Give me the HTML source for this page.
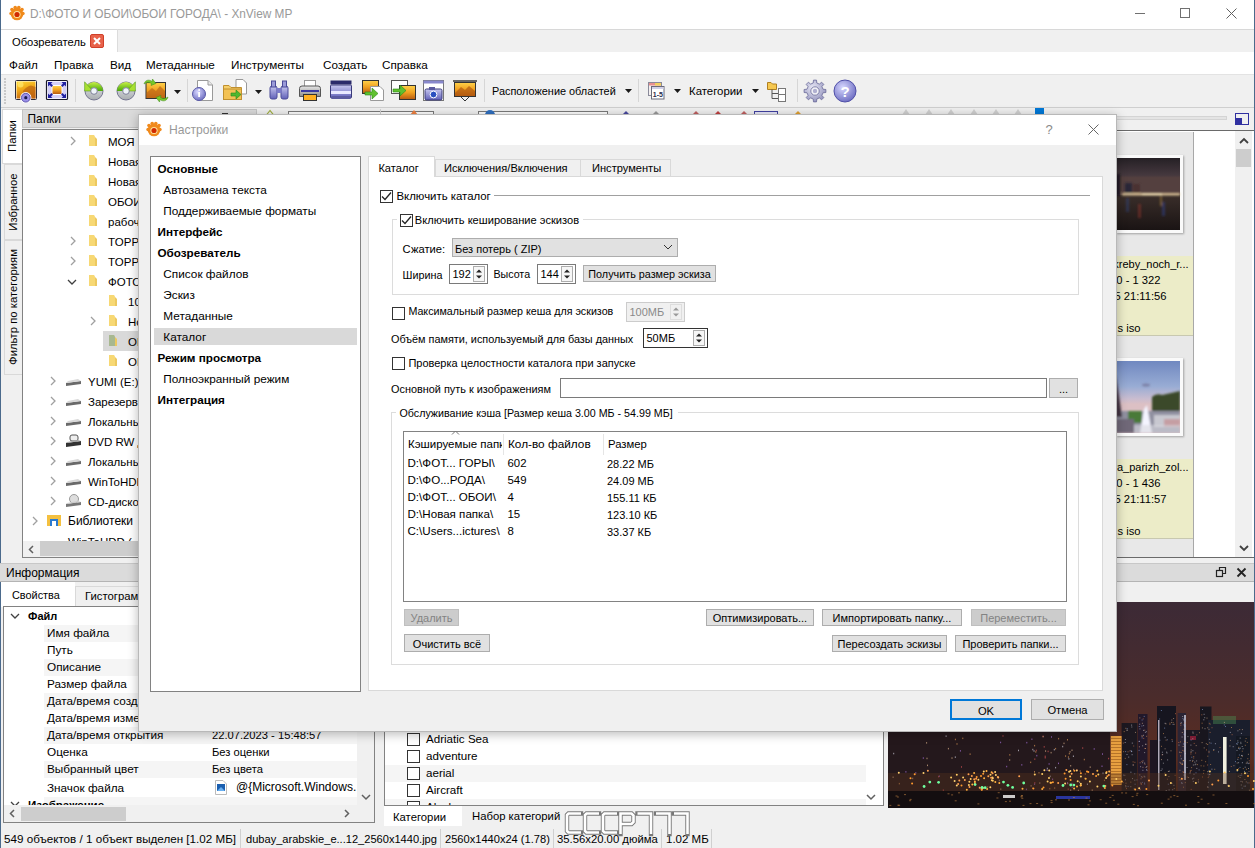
<!DOCTYPE html>
<html><head><meta charset="utf-8"><title>XnView MP</title>
<style>
html,body{margin:0;padding:0;width:1255px;height:848px;overflow:hidden;background:#f0f0f0;position:relative;font-family:"Liberation Sans", sans-serif}
.t{position:absolute;white-space:nowrap;line-height:1.117;font-family:"Liberation Sans", sans-serif}
svg{overflow:visible}
</style></head><body>
<div style="position:absolute;left:0px;top:0px;width:1255px;height:29px;background:#fff"></div><div style="position:absolute;left:0px;top:29px;width:1255px;height:23px;background:#f0f0f0"></div><div style="position:absolute;left:1px;top:29px;width:116px;height:23px;background:#fff"></div><div style="position:absolute;left:1px;top:29px;width:1254px;height:1px;background:#d8d8d8"></div><div style="position:absolute;left:117px;top:29px;width:1px;height:23px;background:#dcdcdc"></div><div style="position:absolute;left:0px;top:52px;width:1255px;height:22px;background:#fff"></div><div style="position:absolute;left:0px;top:74px;width:1255px;height:33px;background:#f0f0f0;border-top:1px solid #e3e3e3;box-sizing:border-box"></div><div style="position:absolute;left:0px;top:107px;width:1255px;height:1px;background:#cfcfcf"></div><div style="position:absolute;left:0px;top:0px;width:1px;height:848px;background:#4b6a8c"></div><div style="position:absolute;left:1254px;top:0px;width:1px;height:848px;background:#4b6a8c"></div><svg style="position:absolute;left:8px;top:4px" width="18" height="18" viewBox="0 0 18 18">
<g fill="#f08a1c">
<circle cx="9" cy="10" r="6.3"/>
<circle cx="4" cy="5.5" r="1.8"/><circle cx="7.2" cy="3.6" r="1.8"/><circle cx="10.8" cy="3.6" r="1.8"/><circle cx="14" cy="5.5" r="1.8"/>
<circle cx="3" cy="9.5" r="1.7"/><circle cx="15" cy="9.5" r="1.7"/>
</g>
<circle cx="9" cy="10.5" r="3.6" fill="#fde3a0"/>
<circle cx="9" cy="10.5" r="2.6" fill="#d22a00"/>
</svg><div class="t" style="left:30px;top:8.28px;font-size:11.85px;color:#999999;">D:\ФОТО И ОБОИ\ОБОИ ГОРОДА\ - XnView MP</div><div style="position:absolute;left:1135px;top:13px;width:10px;height:1px;background:#707070"></div><div style="position:absolute;left:1180px;top:8px;width:10px;height:10px;border:1px solid #707070;box-sizing:border-box"></div><svg style="position:absolute;left:1226px;top:8px" width="11" height="11"><path d="M0.5 0.5L10.5 10.5M10.5 0.5L0.5 10.5" stroke="#606060" stroke-width="1"/></svg><div class="t" style="left:12px;top:35.86px;font-size:11.2px;color:#000;">Обозреватель</div><svg style="position:absolute;left:90px;top:34px" width="14" height="14"><rect x="0.5" y="0.5" width="13" height="13" rx="1.5" fill="#e8624a" stroke="#d0402a"/>
<path d="M4 4L10 10M10 4L4 10" stroke="#fff" stroke-width="2"/></svg><div class="t" style="left:9px;top:57.91px;font-size:11.7px;color:#000;">Файл</div><div class="t" style="left:54px;top:57.91px;font-size:11.7px;color:#000;">Правка</div><div class="t" style="left:110px;top:57.91px;font-size:11.7px;color:#000;">Вид</div><div class="t" style="left:146px;top:57.91px;font-size:11.7px;color:#000;">Метаданные</div><div class="t" style="left:231px;top:57.91px;font-size:11.7px;color:#000;">Инструменты</div><div class="t" style="left:323px;top:57.91px;font-size:11.7px;color:#000;">Создать</div><div class="t" style="left:382px;top:57.91px;font-size:11.7px;color:#000;">Справка</div><svg width="0" height="0" style="position:absolute">
<defs>
<linearGradient id="gold" x1="0" y1="0" x2="0" y2="1"><stop offset="0" stop-color="#ffd24a"/><stop offset="0.5" stop-color="#f0a020"/><stop offset="1" stop-color="#b85a10"/></linearGradient>
<linearGradient id="grn" x1="0" y1="0" x2="0" y2="1"><stop offset="0" stop-color="#a8e060"/><stop offset="1" stop-color="#3a9a20"/></linearGradient>
<linearGradient id="gry" x1="0" y1="0" x2="0" y2="1"><stop offset="0" stop-color="#e8e8e8"/><stop offset="1" stop-color="#8a8a8a"/></linearGradient>
<linearGradient id="pur" x1="0" y1="0" x2="0" y2="1"><stop offset="0" stop-color="#c8c8f0"/><stop offset="1" stop-color="#6060b8"/></linearGradient>
<radialGradient id="purr" cx="0.4" cy="0.35" r="0.7"><stop offset="0" stop-color="#d8d8ff"/><stop offset="1" stop-color="#6a6ac0"/></radialGradient>
<linearGradient id="sky" x1="0" y1="0" x2="0" y2="1"><stop offset="0" stop-color="#3b2b36"/><stop offset="0.55" stop-color="#54301f"/><stop offset="1" stop-color="#5a2c18"/></linearGradient>
</defs></svg><div style="position:absolute;left:4px;top:78px;width:2px;height:2px;background:#c9c9c9"></div><div style="position:absolute;left:4px;top:81px;width:2px;height:2px;background:#c9c9c9"></div><div style="position:absolute;left:4px;top:84px;width:2px;height:2px;background:#c9c9c9"></div><div style="position:absolute;left:4px;top:87px;width:2px;height:2px;background:#c9c9c9"></div><div style="position:absolute;left:4px;top:90px;width:2px;height:2px;background:#c9c9c9"></div><div style="position:absolute;left:4px;top:93px;width:2px;height:2px;background:#c9c9c9"></div><div style="position:absolute;left:4px;top:96px;width:2px;height:2px;background:#c9c9c9"></div><div style="position:absolute;left:4px;top:99px;width:2px;height:2px;background:#c9c9c9"></div><div style="position:absolute;left:4px;top:102px;width:2px;height:2px;background:#c9c9c9"></div><div style="position:absolute;left:75px;top:79px;width:1px;height:23px;background:#d6d6d6"></div><div style="position:absolute;left:187px;top:79px;width:1px;height:23px;background:#d6d6d6"></div><div style="position:absolute;left:484px;top:79px;width:1px;height:23px;background:#d6d6d6"></div><div style="position:absolute;left:638px;top:79px;width:1px;height:23px;background:#d6d6d6"></div><div style="position:absolute;left:797px;top:79px;width:1px;height:23px;background:#d6d6d6"></div><svg style="position:absolute;left:14px;top:79px" width="24" height="24" viewBox="0 0 24 24"><defs><linearGradient id="g1" x1="0" y1="0" x2="0.3" y2="1"><stop offset="0" stop-color="#ffd838"/><stop offset="0.5" stop-color="#f0a818"/><stop offset="1" stop-color="#c86a10"/></linearGradient></defs>
<rect x="1.5" y="1.5" width="21" height="19" rx="1" fill="#fff" stroke="#2a2a3a" stroke-width="1"/>
<rect x="2.5" y="2.5" width="19" height="17" fill="url(#g1)"/>
<path d="M9 12Q13 7 17 6.5L21.5 8V19.5H9z" fill="#c06810" opacity="0.75"/>
<circle cx="6.5" cy="5.5" r="3" fill="#ffe870" opacity="0.7"/>
<circle cx="11.8" cy="18.7" r="5.6" fill="#fff"/><circle cx="11.8" cy="18.7" r="4.4" fill="#9a90e8" stroke="#4a40a0" stroke-width="0.8"/><circle cx="11.8" cy="18.7" r="1.6" fill="#1a1a50"/></svg><svg style="position:absolute;left:45px;top:79px" width="24" height="22" viewBox="0 0 24 22"><rect x="1.5" y="1.5" width="21" height="19" rx="1" fill="#fff" stroke="#1a1a2a" stroke-width="1.2"/>
<rect x="2.7" y="2.7" width="18.6" height="16.6" fill="#d4d0f8"/>
<rect x="6.5" y="6" width="11" height="10" fill="#fff"/><rect x="7.5" y="7" width="9" height="8" fill="url(#gold)"/>
<path d="M3 3H7.5L6 4.5L8 6.5L6.5 8L4.5 6L3 7.5z M21 3V7.5L19.5 6L17.5 8L16 6.5L18 4.5L16.5 3z M3 19V14.5L4.5 16L6.5 14L8 15.5L6 17.5L7.5 19z M21 19H16.5L18 17.5L16 15.5L17.5 14L19.5 16L21 14.5z" fill="#2020a0"/></svg><svg style="position:absolute;left:84px;top:80.5px" width="20" height="20" viewBox="0 0 20 20"><defs><linearGradient id="lime" x1="0" y1="0" x2="0" y2="1"><stop offset="0" stop-color="#c8f048"/><stop offset="1" stop-color="#48a808"/></linearGradient><linearGradient id="lgr" x1="0" y1="0" x2="0" y2="1"><stop offset="0" stop-color="#e8ecec"/><stop offset="1" stop-color="#a8acb0"/></linearGradient></defs><g ><circle cx="10" cy="10" r="9" fill="url(#lgr)" stroke="#6a6a88" stroke-width="0.9"/><path d="M1 10A9 9 0 0 1 19 10H13.4A3.4 3.4 0 0 0 6.6 10z" fill="url(#lime)"/><path d="M0.6 0.8V10H9z" fill="#a8e030" stroke="#5a9a20" stroke-width="0.6"/><circle cx="10" cy="10" r="3.3" fill="#eef4f8" stroke="#6a6a88" stroke-width="0.8"/></g></svg><svg style="position:absolute;left:115.5px;top:80.5px" width="20" height="20" viewBox="0 0 20 20"><defs><linearGradient id="lime" x1="0" y1="0" x2="0" y2="1"><stop offset="0" stop-color="#c8f048"/><stop offset="1" stop-color="#48a808"/></linearGradient><linearGradient id="lgr" x1="0" y1="0" x2="0" y2="1"><stop offset="0" stop-color="#e8ecec"/><stop offset="1" stop-color="#a8acb0"/></linearGradient></defs><g transform="translate(20 0) scale(-1 1)"><circle cx="10" cy="10" r="9" fill="url(#lgr)" stroke="#6a6a88" stroke-width="0.9"/><path d="M1 10A9 9 0 0 1 19 10H13.4A3.4 3.4 0 0 0 6.6 10z" fill="url(#lime)"/><path d="M0.6 0.8V10H9z" fill="#a8e030" stroke="#5a9a20" stroke-width="0.6"/><circle cx="10" cy="10" r="3.3" fill="#eef4f8" stroke="#6a6a88" stroke-width="0.8"/></g></svg><svg style="position:absolute;left:143px;top:78px" width="26" height="25" viewBox="0 0 26 25"><rect x="3" y="4.5" width="19.5" height="16" fill="url(#gold)" stroke="#333" stroke-width="1"/>
<path d="M3.5 15L9 10L13 13L17 8L22 13V20H3.5z" fill="#c06a18" opacity="0.75"/>
<path d="M1 6C2 2 6 1 9 3.5L9.5 1L13 5.5L8 7.5L8.5 5.5C6 4 3 4.5 1 6z" fill="#78c828" stroke="#3a8a18" stroke-width="0.5"/>
<path d="M25 19C24 23 20 24 17 21.5L16.5 24L13 19.5L18 17.5L17.5 19.5C20 21 23 20.5 25 19z" fill="#78c828" stroke="#3a8a18" stroke-width="0.5"/></svg><svg style="position:absolute;left:174px;top:90px" width="8" height="5" viewBox="0 0 8 5"><path d="M0 0H7L3.5 4z" fill="#1a1a1a"/></svg><svg style="position:absolute;left:191px;top:79px" width="24" height="23" viewBox="0 0 24 23"><path d="M6.5 1.5H17L21.5 6V21.5H6.5z" fill="#fff" stroke="#999"/><path d="M17 1.5V6H21.5" fill="#e8e8e8" stroke="#999"/>
<circle cx="8" cy="15" r="6.5" fill="url(#purr)" stroke="#5a5aa8"/><rect x="7.2" y="13" width="1.8" height="5" fill="#fff"/><circle cx="8.1" cy="11" r="1" fill="#fff"/></svg><svg style="position:absolute;left:222px;top:78px" width="26" height="24" viewBox="0 0 26 24"><path d="M14 1.5H21L24.5 5V16H14z" fill="#fff" stroke="#999"/>
<path d="M1.5 7.5H7L9 9.5H19.5V21.5H1.5z" fill="#f6cf6a" stroke="#c09030"/><rect x="1.5" y="11" width="18" height="10.5" fill="#f3c255" stroke="#c09030"/>
<path d="M9 15H14V12L19 16.5L14 21V18H9z" fill="#50b830" stroke="#2a8a18" stroke-width="0.6"/></svg><svg style="position:absolute;left:255px;top:90px" width="8" height="5" viewBox="0 0 8 5"><path d="M0 0H7L3.5 4z" fill="#1a1a1a"/></svg><svg style="position:absolute;left:268px;top:80px" width="22" height="20" viewBox="0 0 22 20"><rect x="2" y="6" width="7" height="13" rx="2" fill="url(#pur)" stroke="#4a4a98"/><rect x="13" y="6" width="7" height="13" rx="2" fill="url(#pur)" stroke="#4a4a98"/>
<rect x="3.5" y="1" width="4" height="6" fill="#9a9ad8" stroke="#4a4a98"/><rect x="14.5" y="1" width="4" height="6" fill="#9a9ad8" stroke="#4a4a98"/><rect x="8.5" y="8" width="5" height="5" fill="#7a7ac8"/></svg><svg style="position:absolute;left:298px;top:79px" width="24" height="23" viewBox="0 0 24 23"><rect x="6.5" y="1.5" width="11" height="7" fill="#fff" stroke="#999"/>
<path d="M1.5 9.5Q1.5 7 4 7H20Q22.5 7 22.5 9.5V17.5H1.5z" fill="url(#gry)" stroke="#555"/>
<rect x="3" y="11" width="18" height="2" fill="#3a3aa0"/>
<rect x="5.5" y="15.5" width="13" height="6" fill="#ffb020" stroke="#333"/></svg><svg style="position:absolute;left:329px;top:79px" width="24" height="22" viewBox="0 0 24 22"><rect x="1.5" y="1.5" width="21" height="4" fill="#2a2a6a"/><rect x="1.5" y="6" width="21" height="13" rx="1" fill="url(#pur)" stroke="#3a3a7a"/>
<rect x="2" y="12" width="20" height="3" fill="#e8e8ff"/><rect x="2.5" y="17" width="19" height="3" fill="#5a5aa0"/></svg><svg style="position:absolute;left:361px;top:79px" width="24" height="23" viewBox="0 0 24 23"><rect x="1.5" y="1.5" width="16" height="13" fill="url(#gold)" stroke="#333"/><path d="M9.5 7.5H19L22.5 11V21.5H9.5z" fill="#fff" stroke="#999"/>
<path d="M4 13H11V9L17 14.5L11 20V16H4z" fill="#60c030" stroke="#2a8a18" stroke-width="0.6"/></svg><svg style="position:absolute;left:390px;top:79px" width="27" height="22" viewBox="0 0 27 22"><rect x="1.5" y="1.5" width="16" height="13" fill="#fff" stroke="#555"/><rect x="9.5" y="6.5" width="16" height="14" fill="url(#gold)" stroke="#333"/>
<path d="M3 10H10V6L16 11.5L10 17V13H3z" fill="#60c030" stroke="#2a8a18" stroke-width="0.6"/></svg><svg style="position:absolute;left:422px;top:79px" width="23" height="23" viewBox="0 0 23 23"><rect x="1.5" y="1.5" width="20" height="20" fill="#fff" stroke="#777"/><rect x="1.5" y="1.5" width="20" height="3" fill="#8888cc"/>
<rect x="3" y="10" width="17" height="11" rx="1.5" fill="url(#pur)" stroke="#3a3a7a"/><rect x="7" y="8" width="6" height="3" fill="#5a5aa0"/>
<circle cx="11.5" cy="15.5" r="3.4" fill="#2a50c0" stroke="#fff" stroke-width="1"/></svg><svg style="position:absolute;left:452px;top:79px" width="26" height="23" viewBox="0 0 26 23"><rect x="1" y="1" width="24" height="2" fill="#666"/><rect x="2.5" y="3.5" width="21" height="14" fill="url(#gold)" stroke="#333"/>
<path d="M3 14L9 8L13 11L17 7L23 12V17H3z" fill="#b05810" opacity="0.7"/><path d="M9 18L13 22L17 18" fill="none" stroke="#333"/></svg><div class="t" style="left:492px;top:85.14px;font-size:10.9px;color:#000;">Расположение областей</div><svg style="position:absolute;left:625px;top:89px" width="8" height="5" viewBox="0 0 8 5"><path d="M0 0H7L3.5 4z" fill="#1a1a1a"/></svg><svg style="position:absolute;left:646px;top:81px" width="20" height="20" viewBox="0 0 20 20"><rect x="2.5" y="1.5" width="13" height="13" fill="#f4f0f0" stroke="#8a8a9a"/><rect x="3" y="2" width="12" height="2.5" fill="#e89090"/><rect x="9" y="2" width="6" height="2.5" fill="#f0d060"/>
<rect x="5.5" y="5.5" width="12.5" height="12.5" fill="#fff" stroke="#6a6a7a"/><rect x="6" y="6" width="11.5" height="2" fill="#d0d0e8"/>
<text x="11.8" y="15.5" font-size="7" font-weight="bold" font-family="Liberation Sans" text-anchor="middle" fill="#2a2a4a">1-5</text></svg><svg style="position:absolute;left:674px;top:89px" width="8" height="5" viewBox="0 0 8 5"><path d="M0 0H7L3.5 4z" fill="#1a1a1a"/></svg><div class="t" style="left:689px;top:84.68px;font-size:11.4px;color:#000;">Категории</div><svg style="position:absolute;left:752px;top:89px" width="8" height="5" viewBox="0 0 8 5"><path d="M0 0H7L3.5 4z" fill="#1a1a1a"/></svg><svg style="position:absolute;left:766px;top:79px" width="24" height="23" viewBox="0 0 24 23"><path d="M1.5 3.5H5L6.5 5H10.5V10.5H1.5z" fill="#f6c850" stroke="#b08020"/>
<path d="M6 10.5V19.5H12M6 14.5H12" stroke="#555" fill="none"/>
<rect x="12.5" y="9.5" width="7" height="8" fill="#fff" stroke="#777"/><rect x="12.5" y="15.5" width="7" height="7" fill="#fff" stroke="#777"/></svg><svg style="position:absolute;left:803px;top:79px" width="24" height="24" viewBox="0 0 24 24"><defs><radialGradient id="gr" cx="0.4" cy="0.35" r="0.75"><stop offset="0" stop-color="#e8e8f4"/><stop offset="1" stop-color="#8a8ab8"/></radialGradient></defs><path d="M20.00 10.21L22.89 10.47L22.89 13.53L20.00 13.79L18.92 16.39L20.79 18.62L18.62 20.79L16.39 18.92L13.79 20.00L13.53 22.89L10.47 22.89L10.21 20.00L7.61 18.92L5.38 20.79L3.21 18.62L5.08 16.39L4.00 13.79L1.11 13.53L1.11 10.47L4.00 10.21L5.08 7.61L3.21 5.38L5.38 3.21L7.61 5.08L10.21 4.00L10.47 1.11L13.53 1.11L13.79 4.00L16.39 5.08L18.62 3.21L20.79 5.38L18.92 7.61z" fill="url(#gr)" stroke="#6a6a98" stroke-width="0.8"/><circle cx="12" cy="12" r="4.2" fill="#f4f4f8" stroke="#6a6a98" stroke-width="0.8"/><circle cx="12" cy="12" r="2.2" fill="#b0b0d0"/></svg><svg style="position:absolute;left:833px;top:79px" width="24" height="24" viewBox="0 0 24 24"><circle cx="12" cy="12" r="11" fill="url(#purr)" stroke="#5050a8"/>
<text x="12" y="17.5" font-size="15" font-weight="bold" font-family="Liberation Sans" text-anchor="middle" fill="#fff">?</text></svg><div style="position:absolute;left:2px;top:109px;width:20px;height:55px;background:#fff;border:1px solid #d9d9d9;border-right:none;box-sizing:border-box"></div><div style="position:absolute;left:4px;top:164px;width:18px;height:76px;background:#f0f0f0;border:1px solid #d9d9d9;border-right:none;box-sizing:border-box"></div><div style="position:absolute;left:4px;top:240px;width:18px;height:135px;background:#f0f0f0;border:1px solid #d9d9d9;border-right:none;box-sizing:border-box"></div><div class="t" style="left:13px;top:136px;font-size:11.3px;transform:translate(-50%,-50%) rotate(-90deg);line-height:1">Папки</div><div class="t" style="left:14px;top:202px;font-size:11.3px;transform:translate(-50%,-50%) rotate(-90deg);line-height:1">Избранное</div><div class="t" style="left:14px;top:307px;font-size:11.3px;transform:translate(-50%,-50%) rotate(-90deg);line-height:1">Фильтр по категориям</div><div style="position:absolute;left:22px;top:109px;width:235px;height:19px;background:#dbdbdb;border:1px solid #c4c4c4;box-sizing:border-box"></div><div class="t" style="left:27.5px;top:113.03px;font-size:11.9px;color:#000;">Папки</div><div style="position:absolute;left:22px;top:129px;width:130px;height:429px;background:#fff;border:1px solid #828282;box-sizing:border-box"></div><div style="position:absolute;left:103px;top:331px;width:40px;height:20px;background:#d9d9d9"></div><svg style="position:absolute;left:70px;top:136px" width="6" height="10" viewBox="0 0 6 10"><path d="M1 1L5 5L1 9" stroke="#a0a0a0" stroke-width="1.3" fill="none"/></svg><svg style="position:absolute;left:88px;top:134px" width="10" height="13" viewBox="0 0 10 13"><path d="M1 1H6L7 2.5V12H1z" fill="#f7d874"/><path d="M7 3L9 5V12H7z" fill="#ecc860"/></svg><div class="t" style="left:108px;top:135.59px;font-size:11.5px;color:#000;">МОЯ ПАПКА</div><svg style="position:absolute;left:88px;top:154px" width="10" height="13" viewBox="0 0 10 13"><path d="M1 1H6L7 2.5V12H1z" fill="#f7d874"/><path d="M7 3L9 5V12H7z" fill="#ecc860"/></svg><div class="t" style="left:108px;top:155.59px;font-size:11.5px;color:#000;">Новая папка</div><svg style="position:absolute;left:88px;top:174px" width="10" height="13" viewBox="0 0 10 13"><path d="M1 1H6L7 2.5V12H1z" fill="#f7d874"/><path d="M7 3L9 5V12H7z" fill="#ecc860"/></svg><div class="t" style="left:108px;top:175.59px;font-size:11.5px;color:#000;">Новая папка</div><svg style="position:absolute;left:88px;top:194px" width="10" height="13" viewBox="0 0 10 13"><path d="M1 1H6L7 2.5V12H1z" fill="#f7d874"/><path d="M7 3L9 5V12H7z" fill="#ecc860"/></svg><div class="t" style="left:108px;top:195.59px;font-size:11.5px;color:#000;">ОБОИ ГОРОДА</div><svg style="position:absolute;left:88px;top:214px" width="10" height="13" viewBox="0 0 10 13"><path d="M1 1H6L7 2.5V12H1z" fill="#f7d874"/><path d="M7 3L9 5V12H7z" fill="#ecc860"/></svg><div class="t" style="left:108px;top:215.59px;font-size:11.5px;color:#000;">рабочий</div><svg style="position:absolute;left:70px;top:236px" width="6" height="10" viewBox="0 0 6 10"><path d="M1 1L5 5L1 9" stroke="#a0a0a0" stroke-width="1.3" fill="none"/></svg><svg style="position:absolute;left:88px;top:234px" width="10" height="13" viewBox="0 0 10 13"><path d="M1 1H6L7 2.5V12H1z" fill="#f7d874"/><path d="M7 3L9 5V12H7z" fill="#ecc860"/></svg><div class="t" style="left:108px;top:235.59px;font-size:11.5px;color:#000;">TOPPENT</div><svg style="position:absolute;left:70px;top:256px" width="6" height="10" viewBox="0 0 6 10"><path d="M1 1L5 5L1 9" stroke="#a0a0a0" stroke-width="1.3" fill="none"/></svg><svg style="position:absolute;left:88px;top:254px" width="10" height="13" viewBox="0 0 10 13"><path d="M1 1H6L7 2.5V12H1z" fill="#f7d874"/><path d="M7 3L9 5V12H7z" fill="#ecc860"/></svg><div class="t" style="left:108px;top:255.59px;font-size:11.5px;color:#000;">TOPPENT</div><svg style="position:absolute;left:67px;top:279px" width="10" height="6" viewBox="0 0 10 6"><path d="M1 1L5 5L9 1" stroke="#404040" stroke-width="1.3" fill="none"/></svg><svg style="position:absolute;left:88px;top:274px" width="10" height="13" viewBox="0 0 10 13"><path d="M1 1H6L7 2.5V12H1z" fill="#f7d874"/><path d="M7 3L9 5V12H7z" fill="#ecc860"/></svg><div class="t" style="left:108px;top:275.59px;font-size:11.5px;color:#000;">ФОТО И</div><svg style="position:absolute;left:108px;top:294px" width="10" height="13" viewBox="0 0 10 13"><path d="M1 1H6L7 2.5V12H1z" fill="#f7d874"/><path d="M7 3L9 5V12H7z" fill="#ecc860"/></svg><div class="t" style="left:128px;top:295.59px;font-size:11.5px;color:#000;">10000</div><svg style="position:absolute;left:90px;top:316px" width="6" height="10" viewBox="0 0 6 10"><path d="M1 1L5 5L1 9" stroke="#a0a0a0" stroke-width="1.3" fill="none"/></svg><svg style="position:absolute;left:108px;top:314px" width="10" height="13" viewBox="0 0 10 13"><path d="M1 1H6L7 2.5V12H1z" fill="#f7d874"/><path d="M7 3L9 5V12H7z" fill="#ecc860"/></svg><div class="t" style="left:128px;top:315.59px;font-size:11.5px;color:#000;">Новая</div><svg style="position:absolute;left:108px;top:334px" width="10" height="13" viewBox="0 0 10 13"><path d="M1 1H6L7 2.5V12H1z" fill="#a8b890"/><path d="M7 3L9 5V12H7z" fill="#ecc860"/></svg><div class="t" style="left:128px;top:335.59px;font-size:11.5px;color:#000;">ОБОИ</div><svg style="position:absolute;left:108px;top:354px" width="10" height="13" viewBox="0 0 10 13"><path d="M1 1H6L7 2.5V12H1z" fill="#f7d874"/><path d="M7 3L9 5V12H7z" fill="#ecc860"/></svg><div class="t" style="left:128px;top:355.59px;font-size:11.5px;color:#000;">ОБОИ</div><svg style="position:absolute;left:50px;top:376px" width="6" height="10" viewBox="0 0 6 10"><path d="M1 1L5 5L1 9" stroke="#a0a0a0" stroke-width="1.3" fill="none"/></svg><svg style="position:absolute;left:65px;top:374px" width="17" height="14" viewBox="0 0 17 14"><path d="M1 9L16 7V10L1 12z" fill="#6a6a6a"/><path d="M1 9L16 7L13 5L3 7z" fill="#d8d8d8"/></svg><div class="t" style="left:88px;top:375.59px;font-size:11.5px;color:#000;">YUMI (E:)</div><svg style="position:absolute;left:50px;top:396px" width="6" height="10" viewBox="0 0 6 10"><path d="M1 1L5 5L1 9" stroke="#a0a0a0" stroke-width="1.3" fill="none"/></svg><svg style="position:absolute;left:65px;top:394px" width="17" height="14" viewBox="0 0 17 14"><path d="M1 9L16 7V10L1 12z" fill="#6a6a6a"/><path d="M1 9L16 7L13 5L3 7z" fill="#d8d8d8"/></svg><div class="t" style="left:88px;top:395.59px;font-size:11.5px;color:#000;">Зарезервировано</div><svg style="position:absolute;left:50px;top:416px" width="6" height="10" viewBox="0 0 6 10"><path d="M1 1L5 5L1 9" stroke="#a0a0a0" stroke-width="1.3" fill="none"/></svg><svg style="position:absolute;left:65px;top:414px" width="17" height="14" viewBox="0 0 17 14"><path d="M1 9L16 7V10L1 12z" fill="#6a6a6a"/><path d="M1 9L16 7L13 5L3 7z" fill="#d8d8d8"/></svg><div class="t" style="left:88px;top:415.59px;font-size:11.5px;color:#000;">Локальный диск</div><svg style="position:absolute;left:50px;top:436px" width="6" height="10" viewBox="0 0 6 10"><path d="M1 1L5 5L1 9" stroke="#a0a0a0" stroke-width="1.3" fill="none"/></svg><svg style="position:absolute;left:65px;top:434px" width="17" height="14" viewBox="0 0 17 14"><rect x="5" y="1" width="8" height="6" rx="2" fill="#eee" stroke="#555"/><path d="M1 9L16 7V11L1 13z" fill="#333"/><path d="M1 9L16 7L13 6L2 8z" fill="#aaa"/></svg><div class="t" style="left:88px;top:435.59px;font-size:11.5px;color:#000;">DVD RW дисковод</div><svg style="position:absolute;left:50px;top:456px" width="6" height="10" viewBox="0 0 6 10"><path d="M1 1L5 5L1 9" stroke="#a0a0a0" stroke-width="1.3" fill="none"/></svg><svg style="position:absolute;left:65px;top:454px" width="17" height="14" viewBox="0 0 17 14"><path d="M1 9L16 7V10L1 12z" fill="#6a6a6a"/><path d="M1 9L16 7L13 5L3 7z" fill="#d8d8d8"/></svg><div class="t" style="left:88px;top:455.59px;font-size:11.5px;color:#000;">Локальный диск</div><svg style="position:absolute;left:50px;top:476px" width="6" height="10" viewBox="0 0 6 10"><path d="M1 1L5 5L1 9" stroke="#a0a0a0" stroke-width="1.3" fill="none"/></svg><svg style="position:absolute;left:65px;top:474px" width="17" height="14" viewBox="0 0 17 14"><path d="M1 9L16 7V10L1 12z" fill="#6a6a6a"/><path d="M1 9L16 7L13 5L3 7z" fill="#d8d8d8"/></svg><div class="t" style="left:88px;top:475.59px;font-size:11.5px;color:#000;">WinToHDD</div><svg style="position:absolute;left:50px;top:496px" width="6" height="10" viewBox="0 0 6 10"><path d="M1 1L5 5L1 9" stroke="#a0a0a0" stroke-width="1.3" fill="none"/></svg><svg style="position:absolute;left:65px;top:494px" width="17" height="14" viewBox="0 0 17 14"><circle cx="9" cy="5" r="4.5" fill="#ddd" stroke="#999"/><path d="M1 10L16 8V11L1 13z" fill="#777"/><path d="M1 10L16 8L13 7L2 9z" fill="#ccc"/></svg><div class="t" style="left:88px;top:495.59px;font-size:11.5px;color:#000;">CD-дисковод</div><svg style="position:absolute;left:32px;top:516px" width="6" height="10" viewBox="0 0 6 10"><path d="M1 1L5 5L1 9" stroke="#a0a0a0" stroke-width="1.3" fill="none"/></svg><svg style="position:absolute;left:46px;top:513px" width="17" height="15" viewBox="0 0 17 15"><rect x="1" y="2" width="14" height="11" fill="#f4c040"/><rect x="4" y="6" width="8" height="7" fill="#2a7ad0"/><rect x="6" y="8" width="4" height="5" fill="#fff"/></svg><div class="t" style="left:68px;top:515.14px;font-size:12px;color:#000;">Библиотеки</div><div class="t" style="left:68px;top:535.59px;font-size:11.5px;color:#000;">WinToHDD (</div><div style="position:absolute;left:23px;top:541px;width:115px;height:16px;background:#f0f0f0"></div><div style="position:absolute;left:40px;top:541px;width:98px;height:15px;background:#cdcdcd"></div><svg style="position:absolute;left:28px;top:545px" width="6" height="9" viewBox="0 0 6 9"><path d="M5 1L1.5 4.5L5 8" stroke="#606060" stroke-width="1.5" fill="none"/></svg><div style="position:absolute;left:0px;top:563px;width:380px;height:19px;background:#dbdbdb;border-top:1px solid #c8c8c8;border-bottom:1px solid #b4b4b4;box-sizing:border-box"></div><div class="t" style="left:6px;top:567.14px;font-size:12px;color:#000;">Информация</div><div style="position:absolute;left:1px;top:582px;width:74px;height:25px;background:#fff"></div><div style="position:absolute;left:75px;top:586px;width:70px;height:21px;background:#f0f0f0;border:1px solid #d9d9d9;box-sizing:border-box"></div><div class="t" style="left:12px;top:589.14px;font-size:10.9px;color:#000;">Свойства</div><div class="t" style="left:85px;top:589.77px;font-size:11.3px;color:#000;">Гистограмма</div><div style="position:absolute;left:3px;top:606px;width:372px;height:217px;background:#fff;border:1px solid #828282;box-sizing:border-box"></div><svg style="position:absolute;left:10px;top:613px" width="10" height="6" viewBox="0 0 10 6"><path d="M1 1L5 5L9 1" stroke="#404040" stroke-width="1.3" fill="none"/></svg><div class="t" style="left:28px;top:610.04px;font-size:11px;color:#000;font-weight:bold;">Файл</div><div style="position:absolute;left:44px;top:625px;width:313px;height:17px;background:#f5f5f5"></div><div class="t" style="left:47px;top:626.37px;font-size:11.75px;color:#000;">Имя файла</div><div class="t" style="left:47px;top:643.37px;font-size:11.75px;color:#000;">Путь</div><div style="position:absolute;left:44px;top:659px;width:313px;height:17px;background:#f5f5f5"></div><div class="t" style="left:47px;top:660.37px;font-size:11.75px;color:#000;">Описание</div><div class="t" style="left:47px;top:677.37px;font-size:11.75px;color:#000;">Размер файла</div><div style="position:absolute;left:44px;top:693px;width:313px;height:17px;background:#f5f5f5"></div><div class="t" style="left:47px;top:694.37px;font-size:11.75px;color:#000;">Дата/время созд</div><div class="t" style="left:47px;top:711.37px;font-size:11.75px;color:#000;">Дата/время изме</div><div style="position:absolute;left:44px;top:727px;width:313px;height:17px;background:#f5f5f5"></div><div class="t" style="left:47px;top:728.37px;font-size:11.75px;color:#000;">Дата/время открытия</div><div class="t" style="left:212px;top:728.86px;font-size:11.2px;color:#000;">22.07.2023 - 15:48:57</div><div class="t" style="left:47px;top:745.37px;font-size:11.75px;color:#000;">Оценка</div><div class="t" style="left:212px;top:745.86px;font-size:11.2px;color:#000;">Без оценки</div><div style="position:absolute;left:44px;top:761px;width:313px;height:17px;background:#f5f5f5"></div><div class="t" style="left:47px;top:762.37px;font-size:11.75px;color:#000;">Выбранный цвет</div><div class="t" style="left:212px;top:762.86px;font-size:11.2px;color:#000;">Без цвета</div><div class="t" style="left:47px;top:781.37px;font-size:11.75px;color:#000;">Значок файла</div><svg style="position:absolute;left:215px;top:780px" width="12" height="15" viewBox="0 0 12 15"><path d="M0.5 0.5H8L11.5 4V14.5H0.5z" fill="#fff" stroke="#bbb"/><rect x="2" y="4" width="8" height="7" fill="#1a5fb0"/><path d="M2 11L6 7L10 11z" fill="#6ab0f0"/></svg><div class="t" style="left:236px;top:781.14px;font-size:12px;color:#000;">@{Microsoft.Windows.</div><div style="position:absolute;left:44px;top:797px;width:313px;height:8px;background:#f5f5f5"></div><svg style="position:absolute;left:10px;top:801px" width="10" height="6" viewBox="0 0 10 6"><path d="M1 1L5 5L9 1" stroke="#404040" stroke-width="1.3" fill="none"/></svg><div class="t" style="left:28px;top:798.59px;font-size:11.5px;color:#000;font-weight:bold;">Изображение</div><div style="position:absolute;left:357px;top:607px;width:17px;height:198px;background:#f0f0f0"></div><svg style="position:absolute;left:361px;top:794px" width="10" height="6" viewBox="0 0 10 6"><path d="M1 1L5 5L9 1" stroke="#606060" stroke-width="1.5" fill="none"/></svg><div style="position:absolute;left:4px;top:805px;width:370px;height:17px;background:#f0f0f0"></div><div style="position:absolute;left:21px;top:807px;width:105px;height:14px;background:#cdcdcd"></div><svg style="position:absolute;left:9px;top:809px" width="6" height="9" viewBox="0 0 6 9"><path d="M5 1L1.5 4.5L5 8" stroke="#606060" stroke-width="1.5" fill="none"/></svg><svg style="position:absolute;left:344px;top:809px" width="6" height="9" viewBox="0 0 6 9"><path d="M1 1L4.5 4.5L1 8" stroke="#606060" stroke-width="1.5" fill="none"/></svg><div style="position:absolute;left:384px;top:700px;width:500px;height:106px;background:#fff;border:1px solid #828282;box-sizing:border-box"></div><div style="position:absolute;left:385px;top:701px;width:498px;height:104px;overflow:hidden"><div style="position:absolute;left:22px;top:32px;width:13px;height:13px;background:#fff;border:1px solid #333;box-sizing:border-box"></div><div class="t" style="left:41px;top:31.50px;font-size:11.6px;color:#000;">Adriatic Sea</div><div style="position:absolute;left:22px;top:49px;width:13px;height:13px;background:#fff;border:1px solid #333;box-sizing:border-box"></div><div class="t" style="left:41px;top:48.50px;font-size:11.6px;color:#000;">adventure</div><div style="position:absolute;left:0px;top:64px;width:481px;height:17px;background:#f5f5f5"></div><div style="position:absolute;left:22px;top:66px;width:13px;height:13px;background:#fff;border:1px solid #333;box-sizing:border-box"></div><div class="t" style="left:41px;top:65.50px;font-size:11.6px;color:#000;">aerial</div><div style="position:absolute;left:22px;top:83px;width:13px;height:13px;background:#fff;border:1px solid #333;box-sizing:border-box"></div><div class="t" style="left:41px;top:82.50px;font-size:11.6px;color:#000;">Aircraft</div><div style="position:absolute;left:0px;top:98px;width:481px;height:17px;background:#f5f5f5"></div><div style="position:absolute;left:22px;top:100px;width:13px;height:13px;background:#fff;border:1px solid #333;box-sizing:border-box"></div><div class="t" style="left:41px;top:99.50px;font-size:11.6px;color:#000;">Alaska</div></div><svg style="position:absolute;left:866px;top:794px" width="10" height="6" viewBox="0 0 10 6"><path d="M1 1L5 5L9 1" stroke="#606060" stroke-width="1.5" fill="none"/></svg><div style="position:absolute;left:384px;top:806px;width:78px;height:20px;background:#fff"></div><div class="t" style="left:393px;top:810.77px;font-size:11.3px;color:#000;">Категории</div><div class="t" style="left:472px;top:809.77px;font-size:11.3px;color:#000;">Набор категорий</div><div style="position:absolute;left:1116px;top:108px;width:138px;height:22px;background:#f0f0f0"></div><div style="position:absolute;left:1116px;top:116px;width:111px;height:4px;background:#e4e4e4;border:1px solid #d4d4d4;box-sizing:border-box"></div><svg style="position:absolute;left:1234px;top:112px" width="16" height="14" viewBox="0 0 16 14"><rect x="1.5" y="1.5" width="13" height="11" fill="none" stroke="#3030a0"/><rect x="1" y="6" width="7" height="7" fill="#3030a0"/></svg><div style="position:absolute;left:1116px;top:130px;width:138px;height:1px;background:#6a6a6a"></div><div style="position:absolute;left:1116px;top:131px;width:138px;height:426px;background:#fff"></div><div style="position:absolute;left:1235px;top:131px;width:17px;height:426px;background:#f0f0f0"></div><svg style="position:absolute;left:1239px;top:137px" width="10" height="7" viewBox="0 0 10 7"><path d="M1 6L5 2L9 6" stroke="#404040" stroke-width="1.8" fill="none"/></svg><div style="position:absolute;left:1236px;top:149px;width:15px;height:18px;background:#cdcdcd"></div><svg style="position:absolute;left:1239px;top:545px" width="10" height="7" viewBox="0 0 10 7"><path d="M1 1L5 5L9 1" stroke="#404040" stroke-width="1.8" fill="none"/></svg><div style="position:absolute;left:1116px;top:132px;width:78px;height:425px;background:#e8e8e8;border-right:1px solid #a8a8a8;box-sizing:border-box"></div><div style="position:absolute;left:1116px;top:256px;width:77px;height:80px;background:#ececc8;border-bottom:1px solid #c8c8b0;box-sizing:border-box"></div><div style="position:absolute;left:1116px;top:459px;width:77px;height:80px;background:#ececc8;border-bottom:1px solid #c8c8b0;box-sizing:border-box"></div><div style="position:absolute;left:1116px;top:155px;width:67px;height:78px;background:#fafafa;box-shadow:1px 1px 2px rgba(0,0,0,0.3)"></div><div style="position:absolute;left:1116px;top:358px;width:67px;height:78px;background:#fafafa;box-shadow:1px 1px 2px rgba(0,0,0,0.3)"></div><svg style="position:absolute;left:1116px;top:158px" width="64" height="72" viewBox="0 0 64 72"><defs><linearGradient id="t1s" x1="0" y1="0" x2="0" y2="1"><stop offset="0" stop-color="#252025"/><stop offset="0.45" stop-color="#45383e"/><stop offset="0.52" stop-color="#54403f"/></linearGradient>
<linearGradient id="t1w" x1="0" y1="0" x2="0" y2="1"><stop offset="0" stop-color="#3a2e2a"/><stop offset="1" stop-color="#1a1414"/></linearGradient>
<filter id="t1b"><feGaussianBlur stdDeviation="0.8"/></filter></defs>
<rect width="64" height="38" fill="url(#t1s)"/><rect y="37" width="64" height="35" fill="url(#t1w)"/>
<g filter="url(#t1b)"><rect x="0" y="16" width="4" height="22" fill="#1e1820"/><rect x="9" y="25" width="7" height="12" fill="#2a2838"/><rect x="17" y="26" width="7" height="11" fill="#4a3030"/>
<rect x="6" y="35" width="58" height="2.5" fill="#e8d0a0" opacity="0.85"/><rect x="26" y="35.5" width="20" height="1.5" fill="#fff0c0"/>
<rect x="10" y="40" width="3" height="14" fill="#3050a0" opacity="0.35"/><rect x="22" y="46" width="3" height="14" fill="#c04030" opacity="0.35"/><rect x="46" y="44" width="3" height="14" fill="#3050c0" opacity="0.35"/><rect x="44" y="38" width="2" height="10" fill="#d0a040" opacity="0.4"/></g></svg><svg style="position:absolute;left:1116px;top:361px" width="64" height="72" viewBox="0 0 64 72"><defs><linearGradient id="t2s" x1="0" y1="0" x2="0" y2="1"><stop offset="0" stop-color="#7088c0"/><stop offset="0.35" stop-color="#98acd4"/><stop offset="0.52" stop-color="#c8bcd0"/><stop offset="0.6" stop-color="#dcc0c4"/></linearGradient>
<filter id="t2b" x="-10%" y="-10%" width="120%" height="120%"><feGaussianBlur stdDeviation="1"/></filter><clipPath id="t2c"><rect width="64" height="72"/></clipPath></defs>
<rect width="64" height="72" fill="url(#t2s)"/>
<g filter="url(#t2b)" clip-path="url(#t2c)"><path d="M36 36Q40 32 46 34L64 30V52H36z" fill="#3a4a2a"/><rect x="0" y="50" width="64" height="22" fill="#9090a0"/><rect x="12" y="50" width="14" height="12" fill="#4a7a38"/>
<path d="M0 14L6 56H0z" fill="#403040"/><path d="M24 72L28 48L31 44L36 72z" fill="#f4f4ff"/><rect x="38" y="54" width="26" height="12" fill="#c8c8d0"/><rect x="0" y="58" width="18" height="14" fill="#706878"/><rect x="48" y="58" width="16" height="8" fill="#c06060" opacity="0.4"/><rect x="18" y="64" width="46" height="8" fill="#d8d8e0" opacity="0.6"/><ellipse cx="30" cy="24" rx="4" ry="1.5" fill="#605878" opacity="0.5"/></g></svg><div style="position:absolute;left:1116px;top:0;width:78px;height:848px;overflow:hidden"><div class="t" style="right:5.5px;top:258.05px;font-size:11px;color:#000;text-align:right;">kreby_noch_r...</div><div class="t" style="right:33.5px;top:273.86px;font-size:11.2px;color:#000;text-align:right;">40 - 1 322</div><div class="t" style="right:27.5px;top:289.86px;font-size:11.2px;color:#000;text-align:right;">5 21:11:56</div><div class="t" style="right:53.5px;top:321.86px;font-size:11.2px;color:#000;text-align:right;">&#x27; s iso</div></div><div style="position:absolute;left:1116px;top:0;width:78px;height:848px;overflow:hidden"><div class="t" style="right:5.5px;top:461.05px;font-size:11px;color:#000;text-align:right;">ya_parizh_zol...</div><div class="t" style="right:33.5px;top:476.86px;font-size:11.2px;color:#000;text-align:right;">40 - 1 436</div><div class="t" style="right:27.5px;top:492.86px;font-size:11.2px;color:#000;text-align:right;">5 21:11:57</div><div class="t" style="right:53.5px;top:524.86px;font-size:11.2px;color:#000;text-align:right;">&#x27; s iso</div></div><div style="position:absolute;left:1116px;top:557px;width:138px;height:1px;background:#6a6a6a"></div><div style="position:absolute;left:886px;top:563px;width:368px;height:19px;background:#dbdbdb;border-top:1px solid #c8c8c8;border-bottom:1px solid #b4b4b4;box-sizing:border-box"></div><svg style="position:absolute;left:1215px;top:566px" width="12" height="12" viewBox="0 0 12 12"><rect x="1.5" y="4.5" width="6" height="6" fill="none" stroke="#222" stroke-width="1.2"/><path d="M4.5 4.5V1.5H10.5V7.5H7.5" fill="none" stroke="#222" stroke-width="1.2"/></svg><svg style="position:absolute;left:1236px;top:567px" width="11" height="11" viewBox="0 0 11 11"><path d="M1.5 1.5L9.5 9.5M9.5 1.5L1.5 9.5" stroke="#222" stroke-width="1.8"/></svg><svg style="position:absolute;left:888px;top:602px" width="366" height="206" viewBox="0 0 366 206"><defs><linearGradient id="sky2" x1="0" y1="0" x2="0" y2="1"><stop offset="0" stop-color="#3c2a36"/><stop offset="0.45" stop-color="#4a2c2c"/><stop offset="0.75" stop-color="#5a2c20"/><stop offset="1" stop-color="#3a2018"/></linearGradient><filter id="bl" x="-20%" y="-20%" width="140%" height="140%"><feGaussianBlur stdDeviation="0.6"/></filter><filter id="bl2" x="-50%" y="-50%" width="200%" height="200%"><feGaussianBlur stdDeviation="1.2"/></filter></defs><rect width="366" height="206" fill="url(#sky2)"/><rect x="0" y="130" width="222" height="60" fill="#24181c" opacity="1"/><rect x="233.5999999999999" y="121" width="15.800000000000182" height="69" fill="#1c1820" opacity="1"/><rect x="250" y="112" width="9.5" height="78" fill="#22182a" opacity="1"/><rect x="262" y="138" width="7" height="52" fill="#1e1622" opacity="1"/><rect x="269" y="104" width="19" height="86" fill="#16151f" opacity="1"/><rect x="270" y="118" width="1.5" height="70" fill="#d8d0e0" opacity="0.8"/><rect x="289.70000000000005" y="111" width="8.299999999999955" height="79" fill="#2a2434" opacity="1"/><rect x="296" y="113" width="2" height="65" fill="#e0e0f0" opacity="0.7"/><rect x="298" y="128" width="14" height="62" fill="#1c1822" opacity="1"/><rect x="302" y="134" width="6" height="4" fill="#c02040" opacity="0.6"/><rect x="312" y="104.5" width="11.5" height="85.5" fill="#18161e" opacity="1"/><rect x="320" y="118" width="42" height="72" fill="#1a1e2c" opacity="1"/><rect x="325" y="114" width="23" height="8" fill="#4a8a50" opacity="0.45"/><rect x="335" y="135" width="3.599999999999909" height="47" fill="#f0f0e0" opacity="1"/><rect x="348" y="134" width="14" height="56" fill="#141822" opacity="1"/><rect x="222.79999999999995" y="134" width="10.799999999999955" height="49" fill="#e8a040" opacity="1"/><rect x="222.79999999999995" y="136" width="10.799999999999955" height="1" fill="#a06020" opacity="0.7"/><rect x="222.79999999999995" y="139" width="10.799999999999955" height="1" fill="#a06020" opacity="0.7"/><rect x="222.79999999999995" y="142" width="10.799999999999955" height="1" fill="#a06020" opacity="0.7"/><rect x="222.79999999999995" y="145" width="10.799999999999955" height="1" fill="#a06020" opacity="0.7"/><rect x="222.79999999999995" y="148" width="10.799999999999955" height="1" fill="#a06020" opacity="0.7"/><rect x="222.79999999999995" y="151" width="10.799999999999955" height="1" fill="#a06020" opacity="0.7"/><rect x="222.79999999999995" y="154" width="10.799999999999955" height="1" fill="#a06020" opacity="0.7"/><rect x="222.79999999999995" y="157" width="10.799999999999955" height="1" fill="#a06020" opacity="0.7"/><rect x="222.79999999999995" y="160" width="10.799999999999955" height="1" fill="#a06020" opacity="0.7"/><rect x="222.79999999999995" y="163" width="10.799999999999955" height="1" fill="#a06020" opacity="0.7"/><rect x="222.79999999999995" y="166" width="10.799999999999955" height="1" fill="#a06020" opacity="0.7"/><rect x="222.79999999999995" y="169" width="10.799999999999955" height="1" fill="#a06020" opacity="0.7"/><rect x="222.79999999999995" y="172" width="10.799999999999955" height="1" fill="#a06020" opacity="0.7"/><rect x="222.79999999999995" y="175" width="10.799999999999955" height="1" fill="#a06020" opacity="0.7"/><rect x="222.79999999999995" y="178" width="10.799999999999955" height="1" fill="#a06020" opacity="0.7"/><rect x="222.79999999999995" y="181" width="10.799999999999955" height="1" fill="#a06020" opacity="0.7"/><g filter="url(#bl)"><rect x="359.3" y="180.4" width="1" height="1" fill="#a0c0ff" opacity="0.5"/><rect x="354.8" y="166.1" width="1" height="1" fill="#ffb060" opacity="0.5"/><rect x="356.4" y="177.0" width="1" height="1" fill="#ffd0a0" opacity="0.5"/><rect x="352.3" y="139.8" width="1" height="1" fill="#e0e0e0" opacity="0.5"/><rect x="242.6" y="148.1" width="1" height="1" fill="#a0c0ff" opacity="0.5"/><rect x="280.4" y="174.0" width="1" height="1" fill="#ffd0a0" opacity="0.5"/><rect x="234.6" y="180.1" width="1" height="1" fill="#ff9050" opacity="0.5"/><rect x="245.2" y="143.5" width="1" height="1" fill="#ff9050" opacity="0.5"/><rect x="293.7" y="160.7" width="1" height="1" fill="#a0c0ff" opacity="0.5"/><rect x="243.6" y="152.2" width="1" height="1" fill="#f0f0ff" opacity="0.5"/><rect x="360.9" y="187.7" width="1" height="1" fill="#ffd0a0" opacity="0.5"/><rect x="302.4" y="142.6" width="1" height="1" fill="#f0f0ff" opacity="0.5"/><rect x="235.1" y="172.6" width="1" height="1" fill="#a0c0ff" opacity="0.5"/><rect x="257.3" y="142.0" width="1" height="1" fill="#ffd0a0" opacity="0.5"/><rect x="237.2" y="183.2" width="1" height="1" fill="#ffd0a0" opacity="0.5"/><rect x="353.2" y="172.6" width="1" height="1" fill="#a0c0ff" opacity="0.5"/><rect x="255.0" y="127.9" width="1" height="1" fill="#e0e0e0" opacity="0.5"/><rect x="302.7" y="147.4" width="1" height="1" fill="#ffd0a0" opacity="0.5"/><rect x="351.2" y="127.1" width="1" height="1" fill="#ffb060" opacity="0.5"/><rect x="250.6" y="147.9" width="1" height="1" fill="#a0c0ff" opacity="0.5"/><rect x="281.4" y="120.6" width="1" height="1" fill="#ff9050" opacity="0.5"/><rect x="296.9" y="170.5" width="1" height="1" fill="#a0c0ff" opacity="0.5"/><rect x="325.2" y="148.0" width="1" height="1" fill="#ffb060" opacity="0.5"/><rect x="238.0" y="186.1" width="1" height="1" fill="#ff9050" opacity="0.5"/><rect x="311.0" y="130.2" width="1" height="1" fill="#ffb060" opacity="0.5"/><rect x="360.8" y="160.5" width="1" height="1" fill="#ff9050" opacity="0.5"/><rect x="250.8" y="124.0" width="1" height="1" fill="#a0c0ff" opacity="0.5"/><rect x="298.6" y="165.0" width="1" height="1" fill="#f0f0ff" opacity="0.5"/><rect x="323.5" y="125.2" width="1" height="1" fill="#ff9050" opacity="0.5"/><rect x="290.3" y="140.0" width="1" height="1" fill="#ff9050" opacity="0.5"/><rect x="350.1" y="166.1" width="1" height="1" fill="#ff9050" opacity="0.5"/><rect x="284.7" y="120.2" width="1" height="1" fill="#ffb060" opacity="0.5"/><rect x="309.9" y="177.3" width="1" height="1" fill="#ffb060" opacity="0.5"/><rect x="291.3" y="159.8" width="1" height="1" fill="#ff9050" opacity="0.5"/><rect x="294.9" y="141.5" width="1" height="1" fill="#a0c0ff" opacity="0.5"/><rect x="253.9" y="120.8" width="1" height="1" fill="#ffd0a0" opacity="0.5"/><rect x="301.5" y="170.6" width="1" height="1" fill="#f0f0ff" opacity="0.5"/><rect x="353.9" y="160.2" width="1" height="1" fill="#f0f0ff" opacity="0.5"/><rect x="285.8" y="186.1" width="1" height="1" fill="#ffb060" opacity="0.5"/><rect x="293.5" y="161.7" width="1" height="1" fill="#ff9050" opacity="0.5"/><rect x="252.7" y="181.8" width="1" height="1" fill="#ffb060" opacity="0.5"/><rect x="235.1" y="149.2" width="1" height="1" fill="#ffb060" opacity="0.5"/><rect x="234.8" y="140.6" width="1" height="1" fill="#ff9050" opacity="0.5"/><rect x="271.1" y="116.5" width="1" height="1" fill="#a0c0ff" opacity="0.5"/><rect x="319.1" y="162.5" width="1" height="1" fill="#ff9050" opacity="0.5"/><rect x="279.8" y="181.7" width="1" height="1" fill="#a0c0ff" opacity="0.5"/><rect x="319.5" y="184.9" width="1" height="1" fill="#ffd0a0" opacity="0.5"/><rect x="254.4" y="167.8" width="1" height="1" fill="#f0f0ff" opacity="0.5"/><rect x="287.0" y="111.2" width="1" height="1" fill="#ff9050" opacity="0.5"/><rect x="319.9" y="179.8" width="1" height="1" fill="#e0e0e0" opacity="0.5"/><rect x="283.4" y="180.9" width="1" height="1" fill="#f0f0ff" opacity="0.5"/><rect x="256.0" y="180.6" width="1" height="1" fill="#a0c0ff" opacity="0.5"/><rect x="246.4" y="159.8" width="1" height="1" fill="#ff9050" opacity="0.5"/><rect x="335.9" y="119.9" width="1" height="1" fill="#ffd0a0" opacity="0.5"/><rect x="251.2" y="121.7" width="1" height="1" fill="#f0f0ff" opacity="0.5"/><rect x="350.0" y="145.8" width="1" height="1" fill="#e0e0e0" opacity="0.5"/><rect x="354.0" y="179.4" width="1" height="1" fill="#ffd0a0" opacity="0.5"/><rect x="238.5" y="127.8" width="1" height="1" fill="#ffd0a0" opacity="0.5"/><rect x="296.7" y="120.6" width="1" height="1" fill="#ff9050" opacity="0.5"/><rect x="351.7" y="135.6" width="1" height="1" fill="#f0f0ff" opacity="0.5"/><rect x="281.4" y="121.8" width="1" height="1" fill="#ffb060" opacity="0.5"/><rect x="319.1" y="142.0" width="1" height="1" fill="#ffb060" opacity="0.5"/><rect x="316.5" y="126.2" width="1" height="1" fill="#e0e0e0" opacity="0.5"/><rect x="353.1" y="171.1" width="1" height="1" fill="#ffb060" opacity="0.5"/><rect x="292.8" y="156.3" width="1" height="1" fill="#f0f0ff" opacity="0.5"/><rect x="291.1" y="149.7" width="1" height="1" fill="#ffd0a0" opacity="0.5"/><rect x="258.1" y="133.8" width="1" height="1" fill="#ffb060" opacity="0.5"/><rect x="254.1" y="133.6" width="1" height="1" fill="#ffb060" opacity="0.5"/><rect x="336.0" y="154.9" width="1" height="1" fill="#e0e0e0" opacity="0.5"/><rect x="319.7" y="175.0" width="1" height="1" fill="#ff9050" opacity="0.5"/><rect x="352.5" y="178.9" width="1" height="1" fill="#f0f0ff" opacity="0.5"/><rect x="243.8" y="140.6" width="1" height="1" fill="#f0f0ff" opacity="0.5"/><rect x="306.6" y="162.3" width="1" height="1" fill="#e0e0e0" opacity="0.5"/><rect x="276.6" y="120.8" width="1" height="1" fill="#f0f0ff" opacity="0.5"/><rect x="295.5" y="172.6" width="1" height="1" fill="#e0e0e0" opacity="0.5"/><rect x="254.1" y="160.2" width="1" height="1" fill="#e0e0e0" opacity="0.5"/><rect x="322.1" y="162.0" width="1" height="1" fill="#ffb060" opacity="0.5"/><rect x="351.7" y="172.9" width="1" height="1" fill="#a0c0ff" opacity="0.5"/><rect x="236.7" y="140.0" width="1" height="1" fill="#f0f0ff" opacity="0.5"/><rect x="276.4" y="170.7" width="1" height="1" fill="#ffb060" opacity="0.5"/><rect x="253.8" y="179.9" width="1" height="1" fill="#a0c0ff" opacity="0.5"/><rect x="277.4" y="121.3" width="1" height="1" fill="#ffd0a0" opacity="0.5"/><rect x="342.8" y="164.0" width="1" height="1" fill="#ff9050" opacity="0.5"/><rect x="317.1" y="159.2" width="1" height="1" fill="#ffb060" opacity="0.5"/><rect x="256.3" y="174.4" width="1" height="1" fill="#e0e0e0" opacity="0.5"/><rect x="252.2" y="180.5" width="1" height="1" fill="#ffd0a0" opacity="0.5"/><rect x="305.2" y="175.7" width="1" height="1" fill="#f0f0ff" opacity="0.5"/><rect x="309.9" y="179.5" width="1" height="1" fill="#f0f0ff" opacity="0.5"/><rect x="250.8" y="138.7" width="1" height="1" fill="#a0c0ff" opacity="0.5"/><rect x="304.6" y="130.7" width="1" height="1" fill="#ffd0a0" opacity="0.5"/><rect x="352.9" y="130.9" width="1" height="1" fill="#f0f0ff" opacity="0.5"/><rect x="277.7" y="188.0" width="1" height="1" fill="#e0e0e0" opacity="0.5"/><rect x="360.3" y="161.1" width="1" height="1" fill="#e0e0e0" opacity="0.5"/><rect x="256.6" y="146.0" width="1" height="1" fill="#ff9050" opacity="0.5"/><rect x="308.9" y="162.1" width="1" height="1" fill="#ffb060" opacity="0.5"/><rect x="302.4" y="151.5" width="1" height="1" fill="#ff9050" opacity="0.5"/><rect x="292.3" y="122.7" width="1" height="1" fill="#ff9050" opacity="0.5"/><rect x="305.7" y="140.9" width="1" height="1" fill="#ff9050" opacity="0.5"/><rect x="254.5" y="158.4" width="1" height="1" fill="#ffd0a0" opacity="0.5"/><rect x="241.5" y="148.4" width="1" height="1" fill="#ff9050" opacity="0.5"/><rect x="254.4" y="164.8" width="1" height="1" fill="#ffd0a0" opacity="0.5"/><rect x="353.7" y="185.7" width="1" height="1" fill="#a0c0ff" opacity="0.5"/><rect x="301.6" y="158.1" width="1" height="1" fill="#f0f0ff" opacity="0.5"/><rect x="357.0" y="183.6" width="1" height="1" fill="#a0c0ff" opacity="0.5"/><rect x="313.6" y="140.1" width="1" height="1" fill="#ffd0a0" opacity="0.5"/><rect x="300.1" y="175.0" width="1" height="1" fill="#ffd0a0" opacity="0.5"/><rect x="236.9" y="137.0" width="1" height="1" fill="#e0e0e0" opacity="0.5"/><rect x="302.5" y="150.0" width="1" height="1" fill="#ff9050" opacity="0.5"/><rect x="349.8" y="173.7" width="1" height="1" fill="#ffd0a0" opacity="0.5"/><rect x="307.5" y="170.4" width="1" height="1" fill="#a0c0ff" opacity="0.5"/><rect x="239.5" y="149.3" width="1" height="1" fill="#ff9050" opacity="0.5"/><rect x="278.9" y="176.7" width="1" height="1" fill="#ff9050" opacity="0.5"/><rect x="293.8" y="176.7" width="1" height="1" fill="#ff9050" opacity="0.5"/><rect x="273.6" y="166.5" width="1" height="1" fill="#f0f0ff" opacity="0.5"/><rect x="275.0" y="131.1" width="1" height="1" fill="#ffb060" opacity="0.5"/><rect x="295.5" y="126.8" width="1" height="1" fill="#ffd0a0" opacity="0.5"/><rect x="285.1" y="116.0" width="1" height="1" fill="#ffd0a0" opacity="0.5"/><rect x="303.3" y="154.7" width="1" height="1" fill="#a0c0ff" opacity="0.5"/><rect x="273.0" y="157.1" width="1" height="1" fill="#ffd0a0" opacity="0.5"/><rect x="252.1" y="164.2" width="1" height="1" fill="#f0f0ff" opacity="0.5"/><rect x="256.1" y="160.6" width="1" height="1" fill="#f0f0ff" opacity="0.5"/><rect x="295.7" y="148.6" width="1" height="1" fill="#ffd0a0" opacity="0.5"/><rect x="245.0" y="162.5" width="1" height="1" fill="#ff9050" opacity="0.5"/><rect x="350.3" y="144.8" width="1" height="1" fill="#ffb060" opacity="0.5"/><rect x="284.2" y="187.2" width="1" height="1" fill="#e0e0e0" opacity="0.5"/><rect x="255.1" y="123.1" width="1" height="1" fill="#e0e0e0" opacity="0.5"/><rect x="349.5" y="140.1" width="1" height="1" fill="#a0c0ff" opacity="0.5"/><rect x="353.8" y="153.8" width="1" height="1" fill="#ffb060" opacity="0.5"/><rect x="312.6" y="163.3" width="1" height="1" fill="#ffb060" opacity="0.5"/><rect x="276.6" y="134.8" width="1" height="1" fill="#f0f0ff" opacity="0.5"/><rect x="357.8" y="160.7" width="1" height="1" fill="#ffd0a0" opacity="0.5"/><rect x="238.7" y="127.6" width="1" height="1" fill="#e0e0e0" opacity="0.5"/><rect x="343.6" y="132.2" width="1" height="1" fill="#ff9050" opacity="0.5"/><rect x="320.5" y="126.8" width="1" height="1" fill="#ffd0a0" opacity="0.5"/><rect x="283.8" y="138.7" width="1" height="1" fill="#f0f0ff" opacity="0.5"/><rect x="320.2" y="168.6" width="1" height="1" fill="#a0c0ff" opacity="0.5"/><rect x="295.1" y="117.4" width="1" height="1" fill="#f0f0ff" opacity="0.5"/><rect x="304.4" y="129.6" width="1" height="1" fill="#f0f0ff" opacity="0.5"/><rect x="237.4" y="184.3" width="1" height="1" fill="#e0e0e0" opacity="0.5"/><rect x="302.7" y="167.9" width="1" height="1" fill="#ff9050" opacity="0.5"/><rect x="278.8" y="137.3" width="1" height="1" fill="#a0c0ff" opacity="0.5"/><rect x="295.0" y="169.9" width="1" height="1" fill="#ff9050" opacity="0.5"/><rect x="235.7" y="129.1" width="1" height="1" fill="#ffb060" opacity="0.5"/><rect x="304.0" y="158.8" width="1" height="1" fill="#ffb060" opacity="0.5"/><rect x="320.9" y="136.8" width="1" height="1" fill="#f0f0ff" opacity="0.5"/><rect x="318.0" y="147.4" width="1" height="1" fill="#ff9050" opacity="0.5"/><rect x="255.6" y="173.7" width="1" height="1" fill="#ffd0a0" opacity="0.5"/><rect x="239.6" y="183.9" width="1" height="1" fill="#a0c0ff" opacity="0.5"/><rect x="360.6" y="180.4" width="1" height="1" fill="#ff9050" opacity="0.5"/><rect x="240.2" y="154.6" width="1" height="1" fill="#f0f0ff" opacity="0.5"/><rect x="344.7" y="144.2" width="1" height="1" fill="#f0f0ff" opacity="0.5"/><rect x="356.7" y="164.7" width="1" height="1" fill="#f0f0ff" opacity="0.5"/><rect x="298.8" y="174.6" width="1" height="1" fill="#ff9050" opacity="0.5"/><rect x="243.2" y="149.0" width="1" height="1" fill="#e0e0e0" opacity="0.5"/><rect x="322.6" y="140.7" width="1" height="1" fill="#a0c0ff" opacity="0.5"/><rect x="242.4" y="169.7" width="1" height="1" fill="#f0f0ff" opacity="0.5"/><rect x="256.9" y="129.8" width="1" height="1" fill="#e0e0e0" opacity="0.5"/><rect x="351.6" y="175.0" width="1" height="1" fill="#ffd0a0" opacity="0.5"/><rect x="258.0" y="167.2" width="1" height="1" fill="#a0c0ff" opacity="0.5"/><rect x="286.6" y="172.8" width="1" height="1" fill="#ff9050" opacity="0.5"/><rect x="250.9" y="144.3" width="1" height="1" fill="#ffd0a0" opacity="0.5"/><rect x="296.1" y="139.1" width="1" height="1" fill="#ffb060" opacity="0.5"/><rect x="253.4" y="123.5" width="1" height="1" fill="#a0c0ff" opacity="0.5"/><rect x="356.0" y="168.9" width="1" height="1" fill="#e0e0e0" opacity="0.5"/><rect x="335.2" y="170.3" width="1" height="1" fill="#ffb060" opacity="0.5"/><rect x="307.7" y="143.1" width="1" height="1" fill="#ffd0a0" opacity="0.5"/><rect x="308.3" y="165.9" width="1" height="1" fill="#f0f0ff" opacity="0.5"/><rect x="301.9" y="169.4" width="1" height="1" fill="#ff9050" opacity="0.5"/><rect x="294.5" y="169.3" width="1" height="1" fill="#ffb060" opacity="0.5"/><rect x="293.6" y="161.6" width="1" height="1" fill="#ffb060" opacity="0.5"/><rect x="243.1" y="122.6" width="1" height="1" fill="#f0f0ff" opacity="0.5"/><rect x="321.6" y="121.6" width="1" height="1" fill="#ffb060" opacity="0.5"/><rect x="299.4" y="134.1" width="1" height="1" fill="#e0e0e0" opacity="0.5"/><rect x="279.1" y="157.4" width="1" height="1" fill="#f0f0ff" opacity="0.5"/><rect x="354.5" y="146.2" width="1" height="1" fill="#f0f0ff" opacity="0.5"/><rect x="357.8" y="179.4" width="1" height="1" fill="#ffd0a0" opacity="0.5"/><rect x="254.1" y="174.7" width="1" height="1" fill="#ffb060" opacity="0.5"/><rect x="353.8" y="148.7" width="1" height="1" fill="#ffb060" opacity="0.5"/><rect x="314.0" y="174.5" width="1" height="1" fill="#ff9050" opacity="0.5"/><rect x="315.4" y="168.1" width="1" height="1" fill="#ffb060" opacity="0.5"/><rect x="347.0" y="159.1" width="1" height="1" fill="#a0c0ff" opacity="0.5"/><rect x="313.3" y="112.3" width="1" height="1" fill="#ff9050" opacity="0.5"/><rect x="358.7" y="159.6" width="1" height="1" fill="#ffd0a0" opacity="0.5"/><rect x="253.0" y="181.3" width="1" height="1" fill="#ff9050" opacity="0.5"/><rect x="256.1" y="150.1" width="1" height="1" fill="#e0e0e0" opacity="0.5"/><rect x="315.3" y="117.3" width="1" height="1" fill="#f0f0ff" opacity="0.5"/><rect x="316.2" y="115.2" width="1" height="1" fill="#e0e0e0" opacity="0.5"/><rect x="355.6" y="183.7" width="1" height="1" fill="#e0e0e0" opacity="0.5"/><rect x="304.0" y="176.4" width="1" height="1" fill="#f0f0ff" opacity="0.5"/><rect x="352.5" y="156.2" width="1" height="1" fill="#e0e0e0" opacity="0.5"/><rect x="290.8" y="175.0" width="1" height="1" fill="#ffd0a0" opacity="0.5"/><rect x="319.3" y="153.7" width="1" height="1" fill="#ffb060" opacity="0.5"/><rect x="320.5" y="150.1" width="1" height="1" fill="#ff9050" opacity="0.5"/><rect x="272.6" y="168.0" width="1" height="1" fill="#f0f0ff" opacity="0.5"/><rect x="237.3" y="125.8" width="1" height="1" fill="#ffb060" opacity="0.5"/><rect x="310.6" y="167.4" width="1" height="1" fill="#a0c0ff" opacity="0.5"/><rect x="255.2" y="135.9" width="1" height="1" fill="#ff9050" opacity="0.5"/><rect x="253.2" y="133.5" width="1" height="1" fill="#ffd0a0" opacity="0.5"/><rect x="313.3" y="157.8" width="1" height="1" fill="#ffb060" opacity="0.5"/><rect x="256.5" y="161.7" width="1" height="1" fill="#ffb060" opacity="0.5"/><rect x="293.5" y="181.0" width="1" height="1" fill="#f0f0ff" opacity="0.5"/><rect x="353.4" y="152.9" width="1" height="1" fill="#f0f0ff" opacity="0.5"/><rect x="278.1" y="149.6" width="1" height="1" fill="#e0e0e0" opacity="0.5"/><rect x="256.2" y="181.6" width="1" height="1" fill="#a0c0ff" opacity="0.5"/><rect x="321.0" y="172.0" width="1" height="1" fill="#ffd0a0" opacity="0.5"/><rect x="360.5" y="168.9" width="1" height="1" fill="#ff9050" opacity="0.5"/><rect x="319.6" y="171.7" width="1" height="1" fill="#a0c0ff" opacity="0.5"/><rect x="357.6" y="136.0" width="1" height="1" fill="#ffb060" opacity="0.5"/><rect x="348.2" y="141.1" width="1" height="1" fill="#a0c0ff" opacity="0.5"/><rect x="341.9" y="137.9" width="1" height="1" fill="#ffd0a0" opacity="0.5"/><rect x="352.4" y="141.1" width="1" height="1" fill="#e0e0e0" opacity="0.5"/><rect x="283.1" y="119.9" width="1" height="1" fill="#ffd0a0" opacity="0.5"/><rect x="348.7" y="160.5" width="1" height="1" fill="#ffd0a0" opacity="0.5"/><rect x="313.6" y="120.7" width="1" height="1" fill="#ffb060" opacity="0.5"/><rect x="294.3" y="147.9" width="1" height="1" fill="#ff9050" opacity="0.5"/><rect x="293.2" y="180.0" width="1" height="1" fill="#a0c0ff" opacity="0.5"/><rect x="285.4" y="182.8" width="1" height="1" fill="#e0e0e0" opacity="0.5"/><rect x="359.2" y="160.7" width="1" height="1" fill="#a0c0ff" opacity="0.5"/><rect x="319.1" y="169.2" width="1" height="1" fill="#ffd0a0" opacity="0.5"/><rect x="359.3" y="156.2" width="1" height="1" fill="#ffb060" opacity="0.5"/><rect x="283.5" y="137.0" width="1" height="1" fill="#ff9050" opacity="0.5"/><rect x="308.3" y="132.4" width="1" height="1" fill="#ffb060" opacity="0.5"/><rect x="246.6" y="181.7" width="1" height="1" fill="#a0c0ff" opacity="0.5"/><rect x="295.1" y="158.1" width="1" height="1" fill="#ffb060" opacity="0.5"/><rect x="326.9" y="141.2" width="1" height="1" fill="#f0f0ff" opacity="0.5"/><rect x="280.6" y="187.4" width="1" height="1" fill="#f0f0ff" opacity="0.5"/><rect x="236.3" y="172.8" width="1" height="1" fill="#ffd0a0" opacity="0.5"/><rect x="295.8" y="176.3" width="1" height="1" fill="#ffb060" opacity="0.5"/><rect x="253.3" y="159.1" width="1" height="1" fill="#ff9050" opacity="0.5"/><rect x="257.6" y="165.0" width="1" height="1" fill="#ffd0a0" opacity="0.5"/><rect x="298.7" y="140.1" width="1" height="1" fill="#ffb060" opacity="0.5"/><rect x="256.8" y="146.0" width="1" height="1" fill="#ffd0a0" opacity="0.5"/><rect x="341.8" y="129.9" width="1" height="1" fill="#f0f0ff" opacity="0.5"/><rect x="315.6" y="111.8" width="1" height="1" fill="#f0f0ff" opacity="0.5"/><rect x="356.8" y="138.6" width="1" height="1" fill="#ffd0a0" opacity="0.5"/><rect x="271.4" y="137.7" width="1" height="1" fill="#a0c0ff" opacity="0.5"/><rect x="255.7" y="113.9" width="1" height="1" fill="#a0c0ff" opacity="0.5"/><rect x="351.5" y="164.9" width="1" height="1" fill="#a0c0ff" opacity="0.5"/><rect x="246.3" y="177.7" width="1" height="1" fill="#e0e0e0" opacity="0.5"/><rect x="296.3" y="123.6" width="1" height="1" fill="#e0e0e0" opacity="0.5"/><rect x="358.5" y="170.7" width="1" height="1" fill="#f0f0ff" opacity="0.5"/><rect x="343.0" y="125.0" width="1" height="1" fill="#ffb060" opacity="0.5"/><rect x="292.8" y="120.3" width="1" height="1" fill="#f0f0ff" opacity="0.5"/><rect x="305.5" y="171.7" width="1" height="1" fill="#f0f0ff" opacity="0.5"/><rect x="358.8" y="139.9" width="1" height="1" fill="#ffb060" opacity="0.5"/><rect x="251.6" y="160.3" width="1" height="1" fill="#ffb060" opacity="0.5"/><rect x="272.9" y="108.0" width="1" height="1" fill="#a0c0ff" opacity="0.5"/><rect x="251.3" y="115.4" width="1" height="1" fill="#ffd0a0" opacity="0.5"/><rect x="337.0" y="124.0" width="1" height="1" fill="#a0c0ff" opacity="0.5"/><rect x="280.8" y="168.6" width="1" height="1" fill="#e0e0e0" opacity="0.5"/><rect x="340.1" y="182.6" width="1" height="1" fill="#ff9050" opacity="0.5"/><rect x="244.5" y="162.5" width="1" height="1" fill="#f0f0ff" opacity="0.5"/><rect x="294.7" y="158.3" width="1" height="1" fill="#ffd0a0" opacity="0.5"/><rect x="302.6" y="149.2" width="1" height="1" fill="#e0e0e0" opacity="0.5"/><rect x="349.8" y="155.0" width="1" height="1" fill="#ff9050" opacity="0.5"/><rect x="320.4" y="173.6" width="1" height="1" fill="#ff9050" opacity="0.5"/><rect x="273.9" y="149.7" width="1" height="1" fill="#f0f0ff" opacity="0.5"/><rect x="292.6" y="150.0" width="1" height="1" fill="#ffb060" opacity="0.5"/><rect x="296.9" y="151.2" width="1" height="1" fill="#e0e0e0" opacity="0.5"/><rect x="294.1" y="114.0" width="1" height="1" fill="#e0e0e0" opacity="0.5"/><rect x="295.5" y="122.4" width="1" height="1" fill="#a0c0ff" opacity="0.5"/><rect x="348.7" y="141.7" width="1" height="1" fill="#f0f0ff" opacity="0.5"/><rect x="304.3" y="136.3" width="1" height="1" fill="#e0e0e0" opacity="0.5"/><rect x="273.7" y="152.3" width="1" height="1" fill="#ff9050" opacity="0.5"/><rect x="255.0" y="132.8" width="1" height="1" fill="#e0e0e0" opacity="0.5"/><rect x="318.5" y="115.6" width="1" height="1" fill="#ffd0a0" opacity="0.5"/><rect x="307.1" y="150.5" width="1" height="1" fill="#ff9050" opacity="0.5"/><rect x="320.8" y="120.8" width="1" height="1" fill="#ff9050" opacity="0.5"/><rect x="254.1" y="143.3" width="1" height="1" fill="#e0e0e0" opacity="0.5"/><rect x="274.9" y="160.7" width="1" height="1" fill="#e0e0e0" opacity="0.5"/><rect x="345.4" y="163.2" width="1" height="1" fill="#ffd0a0" opacity="0.5"/><rect x="273.0" y="143.8" width="1" height="1" fill="#ffb060" opacity="0.5"/><rect x="325.3" y="147.0" width="1" height="1" fill="#f0f0ff" opacity="0.5"/><rect x="274.1" y="152.1" width="1" height="1" fill="#f0f0ff" opacity="0.5"/><rect x="243.3" y="124.5" width="1" height="1" fill="#e0e0e0" opacity="0.5"/><rect x="276.6" y="146.3" width="1" height="1" fill="#ffd0a0" opacity="0.5"/><rect x="352.8" y="182.5" width="1" height="1" fill="#e0e0e0" opacity="0.5"/><rect x="350.9" y="152.5" width="1" height="1" fill="#a0c0ff" opacity="0.5"/><rect x="353.9" y="127.1" width="1" height="1" fill="#ffd0a0" opacity="0.5"/><rect x="317.8" y="141.2" width="1" height="1" fill="#ffd0a0" opacity="0.5"/><rect x="321.6" y="129.9" width="1" height="1" fill="#ff9050" opacity="0.5"/><rect x="350.1" y="160.2" width="1" height="1" fill="#f0f0ff" opacity="0.5"/><rect x="252.5" y="176.3" width="1" height="1" fill="#ffb060" opacity="0.5"/><rect x="359.9" y="151.8" width="1" height="1" fill="#ffd0a0" opacity="0.5"/><rect x="293.9" y="161.9" width="1" height="1" fill="#ffb060" opacity="0.5"/><rect x="258.5" y="167.8" width="1" height="1" fill="#e0e0e0" opacity="0.5"/><rect x="321.2" y="140.3" width="1" height="1" fill="#ffb060" opacity="0.5"/><rect x="294.6" y="144.0" width="1" height="1" fill="#ffd0a0" opacity="0.5"/><rect x="251.3" y="172.4" width="1" height="1" fill="#ffd0a0" opacity="0.5"/><rect x="348.5" y="147.9" width="1" height="1" fill="#f0f0ff" opacity="0.5"/><rect x="238.7" y="126.1" width="1" height="1" fill="#a0c0ff" opacity="0.5"/><rect x="326.2" y="166.8" width="1" height="1" fill="#ffb060" opacity="0.5"/><rect x="238.5" y="152.0" width="1" height="1" fill="#f0f0ff" opacity="0.5"/><rect x="302.6" y="137.5" width="1" height="1" fill="#a0c0ff" opacity="0.5"/><rect x="291.6" y="177.3" width="1" height="1" fill="#e0e0e0" opacity="0.5"/><rect x="236.9" y="177.3" width="1" height="1" fill="#f0f0ff" opacity="0.5"/><rect x="348.7" y="168.7" width="1" height="1" fill="#e0e0e0" opacity="0.5"/><rect x="293.8" y="130.0" width="1" height="1" fill="#ffd0a0" opacity="0.5"/><rect x="252.9" y="174.3" width="1" height="1" fill="#f0f0ff" opacity="0.5"/><rect x="349.4" y="128.3" width="1" height="1" fill="#e0e0e0" opacity="0.5"/><rect x="353.7" y="144.0" width="1" height="1" fill="#f0f0ff" opacity="0.5"/><rect x="256.2" y="127.7" width="1" height="1" fill="#ffb060" opacity="0.5"/><rect x="293.6" y="134.5" width="1" height="1" fill="#f0f0ff" opacity="0.5"/><rect x="320.5" y="148.8" width="1" height="1" fill="#ffd0a0" opacity="0.5"/><rect x="296.8" y="180.1" width="1" height="1" fill="#ffb060" opacity="0.5"/><rect x="292.1" y="160.6" width="1" height="1" fill="#ffd0a0" opacity="0.5"/><rect x="360.8" y="158.3" width="1" height="1" fill="#ff9050" opacity="0.5"/><rect x="254.7" y="116.4" width="1" height="1" fill="#ff9050" opacity="0.5"/><rect x="305.2" y="154.0" width="1" height="1" fill="#ff9050" opacity="0.5"/><rect x="251.8" y="187.1" width="1" height="1" fill="#ffb060" opacity="0.5"/><rect x="291.4" y="167.8" width="1" height="1" fill="#ffd0a0" opacity="0.5"/><rect x="283.3" y="117.5" width="1" height="1" fill="#ffd0a0" opacity="0.5"/><rect x="360.0" y="166.0" width="1" height="1" fill="#ffd0a0" opacity="0.5"/><rect x="349.3" y="138.4" width="1" height="1" fill="#e0e0e0" opacity="0.5"/><rect x="315.7" y="145.4" width="1" height="1" fill="#ffd0a0" opacity="0.5"/><rect x="304.8" y="178.9" width="1" height="1" fill="#e0e0e0" opacity="0.5"/><rect x="279.9" y="169.0" width="1" height="1" fill="#ffd0a0" opacity="0.5"/><rect x="330.0" y="149.4" width="1" height="1" fill="#f0f0ff" opacity="0.5"/><rect x="292.0" y="153.4" width="1" height="1" fill="#ff9050" opacity="0.5"/><rect x="351.8" y="145.7" width="1" height="1" fill="#e0e0e0" opacity="0.5"/><rect x="242.3" y="179.6" width="1" height="1" fill="#ffb060" opacity="0.5"/><rect x="314.0" y="107.0" width="1" height="1" fill="#a0c0ff" opacity="0.5"/><rect x="340.9" y="168.9" width="1" height="1" fill="#ffd0a0" opacity="0.5"/><rect x="251.4" y="126.4" width="1" height="1" fill="#e0e0e0" opacity="0.5"/><rect x="294.4" y="116.1" width="1" height="1" fill="#a0c0ff" opacity="0.5"/><rect x="244.0" y="176.1" width="1" height="1" fill="#e0e0e0" opacity="0.5"/><rect x="308.1" y="158.4" width="1" height="1" fill="#e0e0e0" opacity="0.5"/><rect x="276.1" y="125.6" width="1" height="1" fill="#a0c0ff" opacity="0.5"/><rect x="349.3" y="156.8" width="1" height="1" fill="#f0f0ff" opacity="0.5"/><rect x="295.0" y="184.7" width="1" height="1" fill="#ffb060" opacity="0.5"/><rect x="357.9" y="166.8" width="1" height="1" fill="#ffb060" opacity="0.5"/><rect x="282.5" y="148.3" width="1" height="1" fill="#ffd0a0" opacity="0.5"/><rect x="237.5" y="180.7" width="1" height="1" fill="#ffb060" opacity="0.5"/><rect x="253.6" y="135.4" width="1" height="1" fill="#a0c0ff" opacity="0.5"/><rect x="258.3" y="164.0" width="1" height="1" fill="#e0e0e0" opacity="0.5"/><rect x="292.2" y="121.0" width="1" height="1" fill="#ffb060" opacity="0.5"/><rect x="339.2" y="183.3" width="1" height="1" fill="#f0f0ff" opacity="0.5"/><rect x="302.7" y="186.9" width="1" height="1" fill="#ff9050" opacity="0.5"/><rect x="290.5" y="142.6" width="1" height="1" fill="#e0e0e0" opacity="0.5"/><rect x="244.6" y="159.4" width="1" height="1" fill="#ff9050" opacity="0.5"/><rect x="277.6" y="137.6" width="1" height="1" fill="#ffb060" opacity="0.5"/><rect x="335.8" y="122.4" width="1" height="1" fill="#a0c0ff" opacity="0.5"/><rect x="315.0" y="170.9" width="1" height="1" fill="#ffb060" opacity="0.5"/><rect x="351.0" y="146.4" width="1" height="1" fill="#a0c0ff" opacity="0.5"/><rect x="304.4" y="157.9" width="1" height="1" fill="#e0e0e0" opacity="0.5"/><rect x="284.6" y="122.0" width="1" height="1" fill="#a0c0ff" opacity="0.5"/><rect x="323.4" y="166.7" width="1" height="1" fill="#f0f0ff" opacity="0.5"/><rect x="306.3" y="159.6" width="1" height="1" fill="#e0e0e0" opacity="0.5"/><rect x="304.9" y="162.5" width="1" height="1" fill="#e0e0e0" opacity="0.5"/><rect x="292.0" y="139.4" width="1" height="1" fill="#ffb060" opacity="0.5"/><rect x="313.9" y="125.4" width="1" height="1" fill="#ffd0a0" opacity="0.5"/><rect x="248.4" y="177.4" width="1" height="1" fill="#a0c0ff" opacity="0.5"/><rect x="257.3" y="141.6" width="1" height="1" fill="#f0f0ff" opacity="0.5"/><rect x="238.4" y="162.1" width="1" height="1" fill="#a0c0ff" opacity="0.5"/><rect x="236.8" y="155.9" width="1" height="1" fill="#ffb060" opacity="0.5"/><rect x="237.1" y="149.1" width="1" height="1" fill="#a0c0ff" opacity="0.5"/><rect x="278.5" y="150.5" width="1" height="1" fill="#f0f0ff" opacity="0.5"/><rect x="356.8" y="142.8" width="1" height="1" fill="#ffb060" opacity="0.5"/><rect x="305.2" y="155.5" width="1" height="1" fill="#ffb060" opacity="0.5"/><rect x="341.4" y="143.5" width="1" height="1" fill="#ffd0a0" opacity="0.5"/><rect x="303.1" y="165.1" width="1" height="1" fill="#ffb060" opacity="0.5"/><rect x="246.2" y="171.3" width="1" height="1" fill="#a0c0ff" opacity="0.5"/><rect x="245.7" y="186.4" width="1" height="1" fill="#f0f0ff" opacity="0.5"/><rect x="257.9" y="129.2" width="1" height="1" fill="#e0e0e0" opacity="0.5"/><rect x="319.2" y="184.3" width="1" height="1" fill="#f0f0ff" opacity="0.5"/><rect x="295.5" y="131.7" width="1" height="1" fill="#a0c0ff" opacity="0.5"/><rect x="253.6" y="117.5" width="1" height="1" fill="#a0c0ff" opacity="0.5"/><rect x="315.3" y="163.5" width="1" height="1" fill="#ffb060" opacity="0.5"/><rect x="285.7" y="121.8" width="1" height="1" fill="#ffb060" opacity="0.5"/><rect x="319.2" y="125.3" width="1" height="1" fill="#ffd0a0" opacity="0.5"/><rect x="321.6" y="171.8" width="1" height="1" fill="#a0c0ff" opacity="0.5"/><rect x="307.3" y="161.6" width="1" height="1" fill="#e0e0e0" opacity="0.5"/><rect x="247.0" y="129.9" width="1" height="1" fill="#ffd0a0" opacity="0.5"/><rect x="331.5" y="145.0" width="1" height="1" fill="#ff9050" opacity="0.5"/><rect x="304.4" y="148.2" width="1" height="1" fill="#f0f0ff" opacity="0.5"/><rect x="250.7" y="139.0" width="1" height="1" fill="#f0f0ff" opacity="0.5"/><rect x="301.8" y="168.4" width="1" height="1" fill="#ffb060" opacity="0.5"/><rect x="353.3" y="153.1" width="1" height="1" fill="#f0f0ff" opacity="0.5"/><rect x="242.3" y="184.2" width="1" height="1" fill="#ffd0a0" opacity="0.5"/><rect x="243.0" y="149.1" width="1" height="1" fill="#a0c0ff" opacity="0.5"/><rect x="146.1" y="181.4" width="1" height="1.5" fill="#c080ff" opacity="0.6"/><rect x="214.5" y="170.6" width="1" height="1.5" fill="#f0f0ff" opacity="0.6"/><rect x="68.5" y="141.2" width="1" height="1.5" fill="#ffb060" opacity="0.6"/><rect x="59.9" y="145.9" width="1" height="1.5" fill="#ffd0a0" opacity="0.6"/><rect x="205.7" y="146.2" width="1" height="1.5" fill="#c080ff" opacity="0.6"/><rect x="188.5" y="167.3" width="1" height="1.5" fill="#ff6060" opacity="0.6"/><rect x="183.5" y="147.5" width="1" height="1.5" fill="#ffd0a0" opacity="0.6"/><rect x="196.8" y="171.2" width="1" height="1.5" fill="#ffb060" opacity="0.6"/><rect x="214.0" y="151.3" width="1" height="1.5" fill="#c080ff" opacity="0.6"/><rect x="159.6" y="148.7" width="1" height="1.5" fill="#ff6060" opacity="0.6"/><rect x="180.8" y="150.9" width="1" height="1.5" fill="#ffb060" opacity="0.6"/><rect x="203.7" y="187.4" width="1" height="1.5" fill="#ffd0a0" opacity="0.6"/><rect x="160.6" y="161.2" width="1" height="1.5" fill="#c080ff" opacity="0.6"/><rect x="179.3" y="180.8" width="1" height="1.5" fill="#ffd0a0" opacity="0.6"/><rect x="165.8" y="146.9" width="1" height="1.5" fill="#f0f0ff" opacity="0.6"/><rect x="81.6" y="151.4" width="1" height="1.5" fill="#ffb060" opacity="0.6"/><rect x="191.7" y="168.3" width="1" height="1.5" fill="#ffb060" opacity="0.6"/><rect x="138.3" y="139.9" width="1" height="1.5" fill="#c080ff" opacity="0.6"/><rect x="137.9" y="186.6" width="1" height="1.5" fill="#c080ff" opacity="0.6"/><rect x="130.0" y="147.7" width="1" height="1.5" fill="#f0f0ff" opacity="0.6"/><rect x="179.9" y="154.3" width="1" height="1.5" fill="#ffb060" opacity="0.6"/><rect x="10.8" y="180.9" width="1" height="1.5" fill="#ffb060" opacity="0.6"/><rect x="63.5" y="155.3" width="1" height="1.5" fill="#ffd0a0" opacity="0.6"/><rect x="184.9" y="153.5" width="1" height="1.5" fill="#f0f0ff" opacity="0.6"/><rect x="194.2" y="145.3" width="1" height="1.5" fill="#ff6060" opacity="0.6"/><rect x="150.5" y="170.1" width="1" height="1.5" fill="#ffb060" opacity="0.6"/><rect x="121.2" y="157.3" width="1" height="1.5" fill="#ffd0a0" opacity="0.6"/><rect x="195.8" y="156.8" width="1" height="1.5" fill="#ffb060" opacity="0.6"/><rect x="71.9" y="148.1" width="1" height="1.5" fill="#c080ff" opacity="0.6"/><rect x="155.7" y="144.1" width="1" height="1.5" fill="#ff6060" opacity="0.6"/><rect x="57.6" y="133.4" width="1" height="1.5" fill="#f0f0ff" opacity="0.6"/><rect x="142.2" y="159.6" width="1" height="1.5" fill="#ffb060" opacity="0.6"/><rect x="220.1" y="155.8" width="1" height="1.5" fill="#ff6060" opacity="0.6"/><rect x="145.5" y="148.2" width="1" height="1.5" fill="#f0f0ff" opacity="0.6"/><rect x="201.7" y="164.4" width="1" height="1.5" fill="#ffd0a0" opacity="0.6"/><rect x="39.0" y="162.6" width="1" height="1.5" fill="#ffd0a0" opacity="0.6"/><rect x="143.4" y="136.5" width="1" height="1.5" fill="#c080ff" opacity="0.6"/><rect x="154.6" y="133.6" width="1" height="1.5" fill="#ff6060" opacity="0.6"/><rect x="156.7" y="155.0" width="1" height="1.5" fill="#ff6060" opacity="0.6"/><rect x="183.7" y="184.5" width="1" height="1.5" fill="#c080ff" opacity="0.6"/><rect x="184.3" y="182.4" width="1" height="1.5" fill="#ff6060" opacity="0.6"/><rect x="5.2" y="150.8" width="1" height="1.5" fill="#f0f0ff" opacity="0.6"/><rect x="158.6" y="167.5" width="1" height="1.5" fill="#c080ff" opacity="0.6"/><rect x="158.8" y="165.7" width="1" height="1.5" fill="#f0f0ff" opacity="0.6"/><rect x="74.3" y="135.6" width="1" height="1.5" fill="#ffb060" opacity="0.6"/><rect x="121.3" y="152.1" width="1" height="1.5" fill="#ffb060" opacity="0.6"/><rect x="163.0" y="134.2" width="1" height="1.5" fill="#c080ff" opacity="0.6"/><rect x="166.2" y="185.3" width="1" height="1.5" fill="#ffb060" opacity="0.6"/><rect x="4.6" y="174.5" width="1" height="1.5" fill="#ffd0a0" opacity="0.6"/><rect x="161.3" y="185.9" width="1" height="1.5" fill="#ffb060" opacity="0.6"/><rect x="110.8" y="177.7" width="1" height="1.5" fill="#ffd0a0" opacity="0.6"/><rect x="198.9" y="181.5" width="1" height="1.5" fill="#f0f0ff" opacity="0.6"/><rect x="142.6" y="183.1" width="1" height="1.5" fill="#ffd0a0" opacity="0.6"/><rect x="179.0" y="180.1" width="1" height="1.5" fill="#c080ff" opacity="0.6"/><rect x="112.1" y="139.7" width="1" height="1.5" fill="#c080ff" opacity="0.6"/><rect x="170.0" y="160.6" width="1" height="1.5" fill="#c080ff" opacity="0.6"/><rect x="133.3" y="162.1" width="1" height="1.5" fill="#c080ff" opacity="0.6"/><rect x="99.2" y="184.2" width="1" height="1.5" fill="#ffb060" opacity="0.6"/><rect x="161.7" y="173.6" width="1" height="1.5" fill="#f0f0ff" opacity="0.6"/><rect x="170.1" y="135.9" width="1" height="1.5" fill="#ffb060" opacity="0.6"/><rect x="167.1" y="145.9" width="1" height="1.5" fill="#ffb060" opacity="0.6"/><rect x="189.9" y="187.7" width="1" height="1.5" fill="#ffd0a0" opacity="0.6"/><rect x="144.3" y="146.8" width="1" height="1.5" fill="#f0f0ff" opacity="0.6"/><rect x="174.2" y="143.8" width="1" height="1.5" fill="#f0f0ff" opacity="0.6"/><rect x="213.5" y="163.5" width="1" height="1.5" fill="#c080ff" opacity="0.6"/><rect x="146.3" y="180.0" width="1" height="1.5" fill="#ff6060" opacity="0.6"/><rect x="215.9" y="177.6" width="1" height="1.5" fill="#ffb060" opacity="0.6"/><rect x="144.2" y="185.5" width="1" height="1.5" fill="#ffb060" opacity="0.6"/><rect x="185.1" y="166.8" width="1" height="1.5" fill="#ffd0a0" opacity="0.6"/><rect x="179.0" y="137.0" width="1" height="1.5" fill="#ffb060" opacity="0.6"/><rect x="118.2" y="163.8" width="1" height="1.5" fill="#c080ff" opacity="0.6"/><rect x="191.0" y="179.5" width="1" height="1.5" fill="#f0f0ff" opacity="0.6"/><rect x="146.1" y="142.9" width="1" height="1.5" fill="#ffb060" opacity="0.6"/><rect x="38.1" y="140.1" width="1" height="1.5" fill="#ffd0a0" opacity="0.6"/><rect x="162.6" y="149.9" width="1" height="1.5" fill="#ffd0a0" opacity="0.6"/><rect x="183.5" y="180.9" width="1" height="1.5" fill="#c080ff" opacity="0.6"/><rect x="146.3" y="156.4" width="1" height="1.5" fill="#ff6060" opacity="0.6"/><rect x="90.8" y="184.8" width="1" height="1.5" fill="#f0f0ff" opacity="0.6"/><rect x="167.1" y="164.9" width="1" height="1.5" fill="#f0f0ff" opacity="0.6"/><rect x="27.3" y="170.2" width="1" height="1.5" fill="#c080ff" opacity="0.6"/><rect x="50.1" y="173.9" width="1" height="1.5" fill="#ff6060" opacity="0.6"/><rect x="180.4" y="156.1" width="1" height="1.5" fill="#f0f0ff" opacity="0.6"/><rect x="181.5" y="149.1" width="1" height="1.5" fill="#ffd0a0" opacity="0.6"/><rect x="156.7" y="153.6" width="1" height="1.5" fill="#ff6060" opacity="0.6"/><rect x="157.1" y="148.3" width="1" height="1.5" fill="#ffd0a0" opacity="0.6"/><rect x="182.2" y="163.0" width="1" height="1.5" fill="#ffd0a0" opacity="0.6"/><rect x="154.6" y="133.9" width="1" height="1.5" fill="#ffd0a0" opacity="0.6"/><rect x="182.2" y="187.4" width="1" height="1.5" fill="#ffd0a0" opacity="0.6"/><rect x="148.3" y="152.9" width="1" height="1.5" fill="#c080ff" opacity="0.6"/><rect x="112.3" y="186.4" width="1" height="1.5" fill="#ffd0a0" opacity="0.6"/><rect x="220.4" y="168.7" width="1" height="1.5" fill="#ffd0a0" opacity="0.6"/><rect x="146.0" y="169.1" width="1" height="1.5" fill="#ffb060" opacity="0.6"/><rect x="177.1" y="153.3" width="1" height="1.5" fill="#ffb060" opacity="0.6"/><rect x="114.5" y="133.2" width="1" height="1.5" fill="#ff6060" opacity="0.6"/><rect x="196.4" y="175.7" width="1" height="1.5" fill="#ffd0a0" opacity="0.6"/><rect x="151.3" y="180.3" width="1" height="1.5" fill="#ffd0a0" opacity="0.6"/><rect x="24.2" y="175.7" width="1" height="1.5" fill="#ffd0a0" opacity="0.6"/><rect x="66.9" y="136.7" width="1" height="1.5" fill="#ffb060" opacity="0.6"/><rect x="147.3" y="149.2" width="1" height="1.5" fill="#ffb060" opacity="0.6"/><rect x="54.8" y="187.4" width="1" height="1.5" fill="#ff6060" opacity="0.6"/><rect x="175.5" y="140.6" width="1" height="1.5" fill="#ffd0a0" opacity="0.6"/><rect x="179.7" y="186.4" width="1" height="1.5" fill="#ff6060" opacity="0.6"/><rect x="38.5" y="155.7" width="1" height="1.5" fill="#ffd0a0" opacity="0.6"/><rect x="50.8" y="173.4" width="1" height="1.5" fill="#c080ff" opacity="0.6"/><rect x="34.8" y="155.3" width="1" height="1.5" fill="#c080ff" opacity="0.6"/><rect x="66.8" y="154.4" width="1" height="1.5" fill="#f0f0ff" opacity="0.6"/><rect x="17.4" y="169.1" width="1" height="1.5" fill="#c080ff" opacity="0.6"/><rect x="73.0" y="164.2" width="1" height="1.5" fill="#ff6060" opacity="0.6"/><rect x="147.8" y="147.7" width="1" height="1.5" fill="#ff6060" opacity="0.6"/><rect x="164.1" y="176.5" width="1" height="1.5" fill="#c080ff" opacity="0.6"/></g><g filter="url(#bl)"><rect x="0" y="171" width="366" height="18" fill="#5a3014" opacity="0.35"/><circle cx="131.2" cy="174.2" r="1" fill="#ffa050"/><circle cx="189.0" cy="184.4" r="1" fill="#ffb040"/><circle cx="261.0" cy="178.4" r="1" fill="#ffa050"/><circle cx="178.4" cy="168.1" r="1" fill="#ffa050"/><circle cx="110.2" cy="175.4" r="1" fill="#ffd070"/><circle cx="76.8" cy="178.0" r="1" fill="#ffa050"/><circle cx="277.6" cy="173.0" r="1" fill="#ffd070"/><circle cx="218.1" cy="176.0" r="1" fill="#ffd070"/><circle cx="209.4" cy="184.6" r="1" fill="#ffd070"/><circle cx="162.5" cy="180.8" r="1" fill="#ffb040"/><circle cx="365.9" cy="179.0" r="1" fill="#ffd070"/><circle cx="233.8" cy="179.6" r="1" fill="#ffb040"/><circle cx="78.8" cy="187.7" r="1" fill="#ffb040"/><circle cx="63.1" cy="175.6" r="1" fill="#ffcc66"/><circle cx="84.3" cy="182.6" r="1" fill="#ffb040"/><circle cx="103.6" cy="170.3" r="1" fill="#ffb040"/><circle cx="145.4" cy="186.4" r="1" fill="#ff9a30"/><circle cx="35.5" cy="171.1" r="1" fill="#ffd070"/><circle cx="154.2" cy="172.0" r="1" fill="#ffcc66"/><circle cx="200.3" cy="170.1" r="1" fill="#ff9a30"/><circle cx="282.9" cy="181.0" r="1" fill="#ffcc66"/><circle cx="81.4" cy="179.8" r="1" fill="#ffcc66"/><circle cx="192.9" cy="174.6" r="1" fill="#ffcc66"/><circle cx="98.5" cy="168.9" r="1" fill="#ffb040"/><circle cx="293.8" cy="176.7" r="1" fill="#ffa050"/><circle cx="82.7" cy="177.1" r="1" fill="#ffcc66"/><circle cx="93.0" cy="174.1" r="1" fill="#ff9a30"/><circle cx="90.4" cy="177.8" r="1" fill="#ffcc66"/><circle cx="218.6" cy="170.0" r="1" fill="#ff9a30"/><circle cx="88.7" cy="174.9" r="1" fill="#ff9a30"/><circle cx="192.8" cy="181.8" r="1" fill="#ffd070"/><circle cx="102.3" cy="185.2" r="1" fill="#ffd070"/><circle cx="177.1" cy="181.4" r="1" fill="#ffd070"/><circle cx="161.2" cy="168.6" r="1" fill="#ffd070"/><circle cx="81.5" cy="185.1" r="1" fill="#ffa050"/><circle cx="70.1" cy="182.1" r="1" fill="#ffa050"/><circle cx="170.2" cy="181.0" r="1" fill="#ffa050"/><circle cx="80.5" cy="172.3" r="1" fill="#ffa050"/><circle cx="99.1" cy="187.0" r="1" fill="#ffb040"/><circle cx="216.9" cy="186.0" r="1" fill="#ffb040"/><circle cx="219.3" cy="174.2" r="1" fill="#ff9a30"/><circle cx="22.5" cy="176.3" r="1" fill="#ff9a30"/><circle cx="104.8" cy="178.8" r="1" fill="#ffcc66"/><circle cx="164.9" cy="180.3" r="1" fill="#ff9a30"/><circle cx="321.9" cy="169.6" r="1" fill="#ffcc66"/><circle cx="10.8" cy="170.7" r="1" fill="#ffd070"/><circle cx="93.7" cy="187.5" r="1" fill="#ff9a30"/><circle cx="217.4" cy="183.9" r="1" fill="#ffa050"/><circle cx="224.3" cy="183.4" r="1" fill="#ff9a30"/><circle cx="154.2" cy="187.1" r="1" fill="#ffb040"/><circle cx="71.3" cy="178.4" r="1" fill="#ffa050"/><circle cx="199.0" cy="169.4" r="1" fill="#ff9a30"/><circle cx="210.3" cy="172.4" r="1" fill="#ffcc66"/><circle cx="75.1" cy="175.4" r="1" fill="#ffd070"/><circle cx="176.6" cy="171.5" r="1" fill="#ff9a30"/><circle cx="183.6" cy="171.7" r="1" fill="#ffa050"/><circle cx="95.2" cy="171.7" r="1" fill="#ff9a30"/><circle cx="24.1" cy="181.5" r="1" fill="#ff9a30"/><circle cx="197.7" cy="176.8" r="1" fill="#ffb040"/><circle cx="221.3" cy="169.4" r="1" fill="#ffb040"/><circle cx="68.8" cy="183.6" r="1" fill="#ffd070"/><circle cx="107.3" cy="179.9" r="1" fill="#ffb040"/><circle cx="209.3" cy="168.7" r="1" fill="#ffb040"/><circle cx="155.5" cy="185.6" r="1" fill="#ff9a30"/><circle cx="340.9" cy="184.1" r="1" fill="#ffd070"/><circle cx="68.8" cy="172.7" r="1" fill="#ffcc66"/><circle cx="134.5" cy="186.8" r="1" fill="#ffb040"/><circle cx="360.0" cy="174.1" r="1" fill="#ff9a30"/><circle cx="88.1" cy="176.8" r="1" fill="#ffa050"/><circle cx="95.8" cy="169.5" r="1" fill="#ffd070"/><circle cx="357.0" cy="171.2" r="1" fill="#ffd070"/><circle cx="86.2" cy="177.2" r="1" fill="#ffa050"/><circle cx="365.0" cy="186.9" r="1" fill="#ffb040"/><circle cx="192.9" cy="171.3" r="1" fill="#ff9a30"/><circle cx="146.8" cy="172.4" r="1" fill="#ffcc66"/><circle cx="156.4" cy="168.3" r="1" fill="#ffd070"/><circle cx="104.4" cy="175.4" r="1" fill="#ffcc66"/><circle cx="91.8" cy="185.7" r="1" fill="#ffa050"/><circle cx="182.1" cy="174.6" r="1" fill="#ffcc66"/><circle cx="104.6" cy="171.3" r="1" fill="#ffa050"/><circle cx="100.3" cy="174.3" r="1" fill="#ffa050"/><circle cx="163.0" cy="180.8" r="1" fill="#ffb040"/><circle cx="86.9" cy="181.0" r="1" fill="#ffb040"/><circle cx="86.9" cy="179.4" r="1" fill="#ffb040"/><circle cx="86.1" cy="170.9" r="1" fill="#ffb040"/><circle cx="102.5" cy="172.7" r="1" fill="#ffcc66"/><circle cx="107.1" cy="170.0" r="1" fill="#ffd070"/><circle cx="218.2" cy="171.0" r="1" fill="#ffd070"/><circle cx="307.9" cy="180.9" r="1" fill="#ffcc66"/><circle cx="107.9" cy="172.9" r="1" fill="#ffd070"/><circle cx="208.1" cy="174.1" r="1" fill="#ff9a30"/><circle cx="109.8" cy="174.9" r="1" fill="#ffa050"/><circle cx="247.2" cy="187.5" r="1" fill="#ff9a30"/><circle cx="220.8" cy="173.1" r="1" fill="#ffa050"/><circle cx="111.3" cy="181.0" r="1" fill="#ffb040"/><circle cx="159.6" cy="179.4" r="1" fill="#ffcc66"/><circle cx="186.4" cy="168.8" r="1" fill="#ff9a30"/><circle cx="73.5" cy="183.5" r="1" fill="#ff9a30"/><circle cx="188.8" cy="168.5" r="1" fill="#ffd070"/><circle cx="251.2" cy="186.2" r="1" fill="#ffd070"/><circle cx="192.6" cy="183.5" r="1" fill="#ffd070"/><circle cx="39.9" cy="168.7" r="1" fill="#ffa050"/><circle cx="205.0" cy="172.0" r="1" fill="#ffa050"/><circle cx="182.4" cy="169.0" r="1" fill="#ffd070"/><circle cx="104.8" cy="176.3" r="1" fill="#ffcc66"/><circle cx="336.8" cy="170.4" r="1" fill="#ffcc66"/><circle cx="93.5" cy="186.5" r="1" fill="#ffa050"/><circle cx="330.3" cy="178.6" r="1" fill="#ff9a30"/><circle cx="66.6" cy="179.0" r="1" fill="#ffd070"/><circle cx="192.9" cy="183.3" r="1" fill="#ffb040"/><circle cx="258.4" cy="187.0" r="1" fill="#ff9a30"/><circle cx="349.4" cy="168.0" r="1" fill="#ffcc66"/><circle cx="182.6" cy="178.0" r="1" fill="#ff9a30"/><circle cx="96.1" cy="176.2" r="1" fill="#ffb040"/><circle cx="161.0" cy="176.1" r="1" fill="#ffcc66"/><circle cx="26.7" cy="172.2" r="1" fill="#ff9a30"/><circle cx="186.1" cy="186.5" r="1" fill="#ffb040"/><circle cx="103.8" cy="178.2" r="1" fill="#ffcc66"/><circle cx="270.5" cy="183.8" r="1" fill="#ffd070"/><circle cx="177.6" cy="176.7" r="1" fill="#ff9a30"/><circle cx="228.3" cy="177.1" r="1" fill="#ffcc66"/><circle cx="95.0" cy="186.0" r="1" fill="#ffcc66"/><circle cx="324.3" cy="182.5" r="1" fill="#ffa050"/><circle cx="83.8" cy="174.0" r="1" fill="#ffa050"/><circle cx="189.7" cy="179.3" r="1" fill="#ffcc66"/><circle cx="181.1" cy="169.8" r="1" fill="#ffcc66"/><circle cx="80.9" cy="182.9" r="1" fill="#ffcc66"/><circle cx="103.1" cy="175.8" r="1" fill="#ffa050"/><circle cx="201.9" cy="179.6" r="1" fill="#ffd070"/><circle cx="93.8" cy="187.7" r="1" fill="#ff9a30"/><circle cx="175.0" cy="183.5" r="1.4" fill="#70ffa0"/><circle cx="185.9" cy="183.1" r="1.4" fill="#70ffa0"/><circle cx="36.1" cy="184.5" r="1.4" fill="#70ffa0"/><circle cx="97.2" cy="185.7" r="1.4" fill="#70ffa0"/><circle cx="94.1" cy="185.5" r="1.4" fill="#70ffa0"/><circle cx="182.7" cy="183.0" r="1.4" fill="#70ffa0"/><circle cx="124.6" cy="185.4" r="1.4" fill="#70ffa0"/><circle cx="215.8" cy="184.1" r="1.4" fill="#70ffa0"/><circle cx="50.6" cy="180.3" r="1.4" fill="#70ffa0"/><circle cx="119.9" cy="183.3" r="1.4" fill="#70ffa0"/><circle cx="115.5" cy="180.1" r="1.4" fill="#70ffa0"/><circle cx="87.1" cy="182.6" r="1.4" fill="#70ffa0"/><circle cx="41.8" cy="180.1" r="1.4" fill="#70ffa0"/><circle cx="135.7" cy="181.0" r="1.4" fill="#70ffa0"/></g><rect x="0" y="189" width="366" height="17" fill="#140e10"/><rect x="115" y="193" width="12" height="3" fill="#e0e0e0" opacity="0.9"/><rect x="168" y="194" width="34" height="3" fill="#3040c0" opacity="0.8"/><g filter="url(#bl)"><rect x="133.0" y="193.0" width="2" height="1" fill="#c08040" opacity="0.6"/><rect x="258.2" y="192.1" width="2" height="1" fill="#c08040" opacity="0.6"/><rect x="211.7" y="197.2" width="2" height="1" fill="#c08040" opacity="0.6"/><rect x="197.5" y="195.6" width="2" height="1" fill="#c08040" opacity="0.6"/><rect x="148.1" y="201.0" width="2" height="1" fill="#c08040" opacity="0.6"/><rect x="229.3" y="201.7" width="2" height="1" fill="#c08040" opacity="0.6"/><rect x="223.7" y="192.9" width="2" height="1" fill="#c08040" opacity="0.6"/><rect x="9.3" y="202.7" width="2" height="1" fill="#c08040" opacity="0.6"/><rect x="233.1" y="190.4" width="2" height="1" fill="#c08040" opacity="0.6"/><rect x="70.0" y="190.3" width="2" height="1" fill="#c08040" opacity="0.6"/><rect x="21.1" y="198.2" width="2" height="1" fill="#c08040" opacity="0.6"/><rect x="243.6" y="194.1" width="2" height="1" fill="#c08040" opacity="0.6"/><rect x="121.0" y="198.7" width="2" height="1" fill="#c08040" opacity="0.6"/><rect x="132.6" y="194.5" width="2" height="1" fill="#c08040" opacity="0.6"/><rect x="297.0" y="202.7" width="2" height="1" fill="#c08040" opacity="0.6"/><rect x="309.5" y="199.8" width="2" height="1" fill="#c08040" opacity="0.6"/><rect x="10.1" y="202.8" width="2" height="1" fill="#c08040" opacity="0.6"/><rect x="288.5" y="193.9" width="2" height="1" fill="#c08040" opacity="0.6"/><rect x="184.9" y="195.0" width="2" height="1" fill="#c08040" opacity="0.6"/><rect x="200.9" y="198.4" width="2" height="1" fill="#c08040" opacity="0.6"/><rect x="116.9" y="199.1" width="2" height="1" fill="#c08040" opacity="0.6"/><rect x="337.4" y="201.0" width="2" height="1" fill="#c08040" opacity="0.6"/><rect x="324.5" y="192.5" width="2" height="1" fill="#c08040" opacity="0.6"/><rect x="66.7" y="198.3" width="2" height="1" fill="#c08040" opacity="0.6"/><rect x="279.6" y="196.6" width="2" height="1" fill="#c08040" opacity="0.6"/><rect x="221.3" y="194.9" width="2" height="1" fill="#c08040" opacity="0.6"/><rect x="281.8" y="194.5" width="2" height="1" fill="#c08040" opacity="0.6"/><rect x="312.6" y="196.7" width="2" height="1" fill="#c08040" opacity="0.6"/><rect x="21.6" y="196.9" width="2" height="1" fill="#c08040" opacity="0.6"/><rect x="244.8" y="201.9" width="2" height="1" fill="#c08040" opacity="0.6"/><rect x="272.8" y="200.7" width="2" height="1" fill="#c08040" opacity="0.6"/><rect x="249.0" y="203.2" width="2" height="1" fill="#c08040" opacity="0.6"/><rect x="8.9" y="194.5" width="2" height="1" fill="#c08040" opacity="0.6"/><rect x="217.2" y="200.7" width="2" height="1" fill="#c08040" opacity="0.6"/><rect x="180.0" y="197.5" width="2" height="1" fill="#c08040" opacity="0.6"/><rect x="141.5" y="201.1" width="2" height="1" fill="#c08040" opacity="0.6"/><rect x="152.8" y="202.7" width="2" height="1" fill="#c08040" opacity="0.6"/><rect x="224.9" y="197.8" width="2" height="1" fill="#c08040" opacity="0.6"/><rect x="16.0" y="192.1" width="2" height="1" fill="#c08040" opacity="0.6"/><rect x="248.4" y="190.8" width="2" height="1" fill="#c08040" opacity="0.6"/><rect x="285.3" y="193.1" width="2" height="1" fill="#c08040" opacity="0.6"/><rect x="7.5" y="193.5" width="2" height="1" fill="#c08040" opacity="0.6"/><rect x="1.3" y="202.9" width="2" height="1" fill="#c08040" opacity="0.6"/><rect x="109.7" y="190.2" width="2" height="1" fill="#c08040" opacity="0.6"/><rect x="133.3" y="195.8" width="2" height="1" fill="#c08040" opacity="0.6"/><rect x="63.1" y="192.4" width="2" height="1" fill="#c08040" opacity="0.6"/><rect x="59.5" y="191.3" width="2" height="1" fill="#c08040" opacity="0.6"/><rect x="247.9" y="192.7" width="2" height="1" fill="#c08040" opacity="0.6"/><rect x="199.5" y="202.3" width="2" height="1" fill="#c08040" opacity="0.6"/><rect x="319.4" y="201.2" width="2" height="1" fill="#c08040" opacity="0.6"/><rect x="162.6" y="200.1" width="2" height="1" fill="#c08040" opacity="0.6"/><rect x="89.4" y="201.4" width="2" height="1" fill="#c08040" opacity="0.6"/><rect x="132.6" y="193.7" width="2" height="1" fill="#c08040" opacity="0.6"/><rect x="162.5" y="198.1" width="2" height="1" fill="#c08040" opacity="0.6"/><rect x="365.1" y="201.2" width="2" height="1" fill="#c08040" opacity="0.6"/><rect x="309.3" y="194.0" width="2" height="1" fill="#c08040" opacity="0.6"/><rect x="108.4" y="195.5" width="2" height="1" fill="#c08040" opacity="0.6"/><rect x="237.1" y="190.5" width="2" height="1" fill="#c08040" opacity="0.6"/><rect x="167.0" y="197.3" width="2" height="1" fill="#c08040" opacity="0.6"/><rect x="134.5" y="202.9" width="2" height="1" fill="#c08040" opacity="0.6"/></g></svg><div style="position:absolute;left:1px;top:826px;width:1253px;height:22px;background:#f0f0f0"></div><div style="position:absolute;left:240px;top:829px;width:1px;height:19px;background:#d0d0d0"></div><div style="position:absolute;left:440px;top:829px;width:1px;height:19px;background:#d0d0d0"></div><div style="position:absolute;left:553px;top:829px;width:1px;height:19px;background:#d0d0d0"></div><div style="position:absolute;left:661px;top:829px;width:1px;height:19px;background:#d0d0d0"></div><div style="position:absolute;left:711px;top:829px;width:1px;height:19px;background:#d0d0d0"></div><div class="t" style="left:4px;top:832.46px;font-size:11.65px;color:#000;">549 объектов / 1 объект выделен [1.02 МБ]</div><div class="t" style="left:246px;top:832.97px;font-size:11.08px;color:#000;">dubay_arabskie_e...12_2560x1440.jpg</div><div class="t" style="left:445px;top:832.95px;font-size:11.1px;color:#000;">2560x1440x24 (1.78)</div><div class="t" style="left:557px;top:832.77px;font-size:11.3px;color:#000;">35.56x20.00 дюйма</div><div class="t" style="left:666px;top:832.59px;font-size:11.5px;color:#000;">1.02 МБ</div><svg style="position:absolute;left:0px;top:0px" width="1255" height="848" viewBox="0 0 1255 848"><path d="M581.0 813.5H568.5L567.0 815V831L568.5 832.5H581.0 M599.0 813.5H586.5L585.0 815V831L586.5 832.5H599.0 M617.0 813.5H604.5L603.0 815V831L604.5 832.5H617.0 M620.5 834V813.5H631.5L633.5 815.5V822L631.5 824H620.5 M637.5 813.5H651.0V834 M656 813.5H669.5V834 M674 813.5H687.5V834" fill="none" stroke="#787878" stroke-width="4.4" stroke-linejoin="miter" stroke-linecap="square"/><path d="M581.0 813.5H568.5L567.0 815V831L568.5 832.5H581.0 M599.0 813.5H586.5L585.0 815V831L586.5 832.5H599.0 M617.0 813.5H604.5L603.0 815V831L604.5 832.5H617.0 M620.5 834V813.5H631.5L633.5 815.5V822L631.5 824H620.5 M637.5 813.5H651.0V834 M656 813.5H669.5V834 M674 813.5H687.5V834" fill="none" stroke="#ffffff" stroke-width="2.6" stroke-linejoin="miter" stroke-linecap="butt"/></svg><div style="position:absolute;left:257px;top:108px;width:859px;height:7px;background:#f0f0f0"></div><div style="position:absolute;left:288px;top:111px;width:146px;height:4px;border:1px solid #7a7a7a;border-bottom:none;background:#fff;box-sizing:border-box"></div><div style="position:absolute;left:478px;top:111px;width:130px;height:4px;border:1px solid #7a7a7a;border-bottom:none;background:#fff;box-sizing:border-box"></div><div style="position:absolute;left:380px;top:109px;width:1px;height:6px;background:#d0d0d0"></div><svg style="position:absolute;left:264px;top:109px" width="12" height="6" viewBox="0 0 12 6"><path d="M6 1.5L2.5 6H9.5z" fill="none" stroke="#a0b040" stroke-width="1.2"/></svg><div style="position:absolute;left:222px;top:113px;width:6px;height:2px;background:#333"></div><svg style="position:absolute;left:408px;top:109px" width="12" height="6" viewBox="0 0 12 6"><path d="M6 1L2 6H10z" fill="#f08040"/></svg><svg style="position:absolute;left:483px;top:110px" width="14" height="5" viewBox="0 0 14 5"><path d="M2 5A5 5 0 0 1 12 5" fill="#3070c0"/></svg><svg style="position:absolute;left:620px;top:110px" width="12" height="5" viewBox="0 0 12 5"><path d="M2 5L6 1L10 5z" fill="#4a4aa0"/></svg><svg style="position:absolute;left:650px;top:110px" width="12" height="5" viewBox="0 0 12 5"><path d="M2 5L6 1L10 5z" fill="#999"/></svg><svg style="position:absolute;left:690px;top:110px" width="12" height="5" viewBox="0 0 12 5"><path d="M2 5L6 1L10 5z" fill="#c06060"/></svg><svg style="position:absolute;left:712px;top:110px" width="12" height="5" viewBox="0 0 12 5"><path d="M2 5L6 1L10 5z" fill="#c04040"/></svg><svg style="position:absolute;left:738px;top:110px" width="12" height="5" viewBox="0 0 12 5"><path d="M2 5L6 1L10 5z" fill="#c06060"/></svg><svg style="position:absolute;left:752px;top:110px" width="12" height="5" viewBox="0 0 12 5"><path d="M2 5L6 1L10 5z" fill="#6060a0"/></svg><svg style="position:absolute;left:792px;top:110px" width="12" height="5" viewBox="0 0 12 5"><path d="M2 5L6 1L10 5z" fill="#e0a030"/></svg><div style="position:absolute;left:754px;top:111px;width:24px;height:4px;background:#e6e6f8;border:1px solid #4040a0;border-bottom:none;box-sizing:border-box"></div><svg style="position:absolute;left:900px;top:108px" width="12" height="7" viewBox="0 0 12 7"><path d="M2 7L6 1L10 7z" fill="#d0d0d0"/></svg><svg style="position:absolute;left:923px;top:108px" width="12" height="7" viewBox="0 0 12 7"><path d="M2 7L6 1L10 7z" fill="#d0d0d0"/></svg><svg style="position:absolute;left:945px;top:108px" width="12" height="7" viewBox="0 0 12 7"><path d="M2 7L6 1L10 7z" fill="#d0d0d0"/></svg><svg style="position:absolute;left:968px;top:108px" width="12" height="7" viewBox="0 0 12 7"><path d="M2 7L6 1L10 7z" fill="#d0d0d0"/></svg><svg style="position:absolute;left:990px;top:108px" width="12" height="7" viewBox="0 0 12 7"><path d="M2 7L6 1L10 7z" fill="#d0d0d0"/></svg><svg style="position:absolute;left:1012px;top:108px" width="12" height="7" viewBox="0 0 12 7"><path d="M2 7L6 1L10 7z" fill="#d0d0d0"/></svg><div style="position:absolute;left:1035px;top:108px;width:9px;height:7px;background:#0078d7"></div><div style="position:absolute;left:138px;top:114px;width:979px;height:618px;background:#f0f0f0;border:1px solid #b8b8b8;box-sizing:border-box;box-shadow:0 2px 10px rgba(0,0,0,0.28)"></div><div style="position:absolute;left:139px;top:115px;width:977px;height:30px;background:#fff"></div><svg style="position:absolute;left:145px;top:120px" width="18" height="18" viewBox="0 0 18 18"><g fill="#f08a1c">
<circle cx="9" cy="10" r="6.3"/>
<circle cx="4" cy="5.5" r="1.8"/><circle cx="7.2" cy="3.6" r="1.8"/><circle cx="10.8" cy="3.6" r="1.8"/><circle cx="14" cy="5.5" r="1.8"/>
<circle cx="3" cy="9.5" r="1.7"/><circle cx="15" cy="9.5" r="1.7"/>
</g>
<circle cx="9" cy="10.5" r="3.6" fill="#fde3a0"/>
<circle cx="9" cy="10.5" r="2.6" fill="#d22a00"/></svg><div class="t" style="left:169px;top:124.05px;font-size:12.1px;color:#999999;">Настройки</div><div class="t" style="left:1045.5px;top:122.73px;font-size:13px;color:#8a8a8a;">?</div><svg style="position:absolute;left:1088px;top:124px" width="11" height="11" viewBox="0 0 11 11"><path d="M0.5 0.5L10.5 10.5M10.5 0.5L0.5 10.5" stroke="#666" stroke-width="1"/></svg><div style="position:absolute;left:150px;top:156px;width:211px;height:536px;background:#fff;border:1px solid #828282;box-sizing:border-box"></div><div style="position:absolute;left:154px;top:328px;width:203px;height:17px;background:#d9d9d9"></div><div class="t" style="left:157.5px;top:161.61px;font-size:11.7px;color:#000;font-weight:bold;">Основные</div><div class="t" style="left:163.3px;top:183.52px;font-size:11.8px;color:#000;">Автозамена текста</div><div class="t" style="left:163.3px;top:204.52px;font-size:11.8px;color:#000;">Поддерживаемые форматы</div><div class="t" style="left:157.5px;top:224.61px;font-size:11.7px;color:#000;font-weight:bold;">Интерфейс</div><div class="t" style="left:157.5px;top:245.61px;font-size:11.7px;color:#000;font-weight:bold;">Обозреватель</div><div class="t" style="left:163.3px;top:267.52px;font-size:11.8px;color:#000;">Список файлов</div><div class="t" style="left:163.3px;top:288.52px;font-size:11.8px;color:#000;">Эскиз</div><div class="t" style="left:163.3px;top:309.52px;font-size:11.8px;color:#000;">Метаданные</div><div class="t" style="left:163.3px;top:330.52px;font-size:11.8px;color:#000;">Каталог</div><div class="t" style="left:157.5px;top:350.61px;font-size:11.7px;color:#000;font-weight:bold;">Режим просмотра</div><div class="t" style="left:163.3px;top:372.52px;font-size:11.8px;color:#000;">Полноэкранный режим</div><div class="t" style="left:157.5px;top:392.61px;font-size:11.7px;color:#000;font-weight:bold;">Интеграция</div><div style="position:absolute;left:368px;top:176px;width:735px;height:515px;background:#fff;border:1px solid #d9d9d9;box-sizing:border-box"></div><div style="position:absolute;left:435px;top:159px;width:146px;height:18px;background:#f0f0f0;border:1px solid #d9d9d9;box-sizing:border-box"></div><div style="position:absolute;left:580px;top:159px;width:91px;height:18px;background:#f0f0f0;border:1px solid #d9d9d9;box-sizing:border-box"></div><div style="position:absolute;left:368px;top:156px;width:67px;height:21px;background:#fff;border:1px solid #d9d9d9;border-bottom:none;box-sizing:border-box"></div><div class="t" style="left:378.4px;top:161.95px;font-size:11.1px;color:#000;">Каталог</div><div class="t" style="left:444px;top:162.45px;font-size:11.1px;color:#000;">Исключения/Включения</div><div class="t" style="left:592px;top:162.45px;font-size:11.1px;color:#000;">Инструменты</div><svg style="position:absolute;left:380px;top:190px" width="13" height="13" viewBox="0 0 13 13"><rect x="0.5" y="0.5" width="12" height="12" fill="#fff" stroke="#333"/><path d="M2 6.5L5 9.5L11 2.5" fill="none" stroke="#222" stroke-width="1.3"/></svg><div class="t" style="left:396.5px;top:189.68px;font-size:11.4px;color:#000;">Включить каталог</div><div style="position:absolute;left:494px;top:195px;width:596px;height:1px;background:#a0a0a0"></div><div style="position:absolute;left:392px;top:219px;width:687px;height:76px;border:1px solid #dcdcdc;box-sizing:border-box"></div><div style="position:absolute;left:397px;top:212px;width:186px;height:14px;background:#fff"></div><svg style="position:absolute;left:399.5px;top:213.5px" width="13" height="13" viewBox="0 0 13 13"><rect x="0.5" y="0.5" width="12" height="12" fill="#fff" stroke="#333"/><path d="M2 6.5L5 9.5L11 2.5" fill="none" stroke="#222" stroke-width="1.3"/></svg><div class="t" style="left:414.8px;top:214.15px;font-size:11.1px;color:#000;">Включить кеширование эскизов</div><div class="t" style="left:402.6px;top:243.36px;font-size:11.2px;color:#000;">Сжатие:</div><div style="position:absolute;left:452px;top:238px;width:226px;height:19px;background:#e1e1e1;border:1px solid #adadad;box-sizing:border-box"></div><div class="t" style="left:455px;top:242.54px;font-size:11px;color:#000;">Без потерь ( ZIP)</div><svg style="position:absolute;left:663px;top:244px" width="10" height="6" viewBox="0 0 10 6"><path d="M1 1L5 5L9 1" stroke="#333" stroke-width="1" fill="none"/></svg><div class="t" style="left:402.6px;top:268.73px;font-size:10.8px;color:#000;">Ширина</div><div style="position:absolute;left:449px;top:264px;width:39px;height:20px;background:#fff;border:1px solid #7a7a7a;box-sizing:border-box"></div><div class="t" style="left:452.5px;top:268.05px;font-size:11px;color:#000;">192</div><div style="position:absolute;left:473px;top:266px;width:12px;height:16px;background:#f6f6f6;border:1px solid #adadad;box-sizing:border-box"></div><svg style="position:absolute;left:475px;top:267px" width="8" height="14" viewBox="0 0 8 14"><path d="M1 5.5L4 2.5L7 5.5z" fill="#222"/><path d="M1 8.5L4 11.5L7 8.5z" fill="#222"/></svg><div class="t" style="left:493.4px;top:268.82px;font-size:10.7px;color:#000;">Высота</div><div style="position:absolute;left:537px;top:264px;width:39px;height:20px;background:#fff;border:1px solid #7a7a7a;box-sizing:border-box"></div><div class="t" style="left:540.5px;top:268.05px;font-size:11px;color:#000;">144</div><div style="position:absolute;left:561px;top:266px;width:12px;height:16px;background:#f6f6f6;border:1px solid #adadad;box-sizing:border-box"></div><svg style="position:absolute;left:563px;top:267px" width="8" height="14" viewBox="0 0 8 14"><path d="M1 5.5L4 2.5L7 5.5z" fill="#222"/><path d="M1 8.5L4 11.5L7 8.5z" fill="#222"/></svg><div style="position:absolute;left:583px;top:265px;width:133px;height:17px;background:#e1e1e1;border:1px solid #adadad;box-sizing:border-box"></div><div class="t" style="left:583px;top:266.2px;width:133px;height:17px;line-height:17px;text-align:center;font-size:10.8px;color:#000">Получить размер эскиза</div><svg style="position:absolute;left:391.5px;top:306.5px" width="13" height="13" viewBox="0 0 13 13"><rect x="0.5" y="0.5" width="12" height="12" fill="#fff" stroke="#333"/></svg><div class="t" style="left:408.4px;top:306.32px;font-size:10.7px;color:#000;">Максимальный размер кеша для эскизов</div><div style="position:absolute;left:626px;top:302px;width:59px;height:20px;background:#f0f0f0;border:1px solid #cccccc;box-sizing:border-box"></div><div class="t" style="left:629.5px;top:306.05px;font-size:11px;color:#8a8a8a;">100МБ</div><div style="position:absolute;left:670px;top:304px;width:12px;height:16px;background:#f0f0f0;border:1px solid #ddd;box-sizing:border-box"></div><svg style="position:absolute;left:672px;top:305px" width="8" height="14" viewBox="0 0 8 14"><path d="M1 5.5L4 2.5L7 5.5z" fill="#999"/><path d="M1 8.5L4 11.5L7 8.5z" fill="#999"/></svg><div class="t" style="left:391px;top:333.18px;font-size:10.85px;color:#000;">Объём памяти, используемый для базы данных</div><div style="position:absolute;left:643px;top:328px;width:65px;height:20px;background:#fff;border:1px solid #333;box-sizing:border-box"></div><div class="t" style="left:646.5px;top:332.05px;font-size:11px;color:#000;">50МБ</div><div style="position:absolute;left:693px;top:330px;width:12px;height:16px;background:#f6f6f6;border:1px solid #adadad;box-sizing:border-box"></div><svg style="position:absolute;left:695px;top:331px" width="8" height="14" viewBox="0 0 8 14"><path d="M1 5.5L4 2.5L7 5.5z" fill="#222"/><path d="M1 8.5L4 11.5L7 8.5z" fill="#222"/></svg><svg style="position:absolute;left:391.5px;top:356.5px" width="13" height="13" viewBox="0 0 13 13"><rect x="0.5" y="0.5" width="12" height="12" fill="#fff" stroke="#333"/></svg><div class="t" style="left:408.4px;top:357.05px;font-size:11px;color:#000;">Проверка целостности каталога при запуске</div><div class="t" style="left:391px;top:383.14px;font-size:10.9px;color:#000;">Основной путь к изображениям</div><div style="position:absolute;left:560px;top:378px;width:487px;height:20px;background:#fff;border:1px solid #7a7a7a;box-sizing:border-box"></div><div style="position:absolute;left:1049px;top:378px;width:29px;height:20px;background:#e1e1e1;border:1px solid #adadad;box-sizing:border-box"></div><div class="t" style="left:1049px;top:379.2px;width:29px;height:20px;line-height:20px;text-align:center;font-size:11px;color:#000">...</div><div style="position:absolute;left:391px;top:412px;width:688px;height:253px;border:1px solid #dcdcdc;box-sizing:border-box"></div><div style="position:absolute;left:396px;top:406px;width:282px;height:14px;background:#fff"></div><div class="t" style="left:399.5px;top:407.82px;font-size:10.7px;color:#000;">Обслуживание кэша [Размер кеша 3.00 МБ - 54.99 МБ]</div><div style="position:absolute;left:403px;top:431px;width:664px;height:171px;background:#fff;border:1px solid #828282;box-sizing:border-box"></div><div style="position:absolute;left:503px;top:434px;width:1px;height:21px;background:#e5e5e5"></div><div style="position:absolute;left:603px;top:434px;width:1px;height:21px;background:#e5e5e5"></div><svg style="position:absolute;left:451px;top:430px" width="9" height="5" viewBox="0 0 9 5"><path d="M1 4.5L4.5 1L8 4.5" stroke="#777" stroke-width="1" fill="none"/></svg><div style="position:absolute;left:404px;top:432px;width:98px;height:22px;overflow:hidden"><div class="t" style="left:4px;top:5.89px;font-size:11.5px;color:#000;">Кэшируемые папки</div></div><div class="t" style="left:508px;top:437.62px;font-size:11.8px;color:#000;">Кол-во файлов</div><div class="t" style="left:608px;top:438.07px;font-size:11.3px;color:#000;">Размер</div><div class="t" style="left:407.5px;top:457.00px;font-size:11.6px;color:#000;">D:\ФОТ... ГОРЫ\</div><div class="t" style="left:507.5px;top:457.18px;font-size:11.4px;color:#000;">602</div><div class="t" style="left:607px;top:457.55px;font-size:11px;color:#000;">28.22 МБ</div><div class="t" style="left:407.5px;top:474.07px;font-size:11.6px;color:#000;">D:\ФО...РОДА\</div><div class="t" style="left:507.5px;top:474.25px;font-size:11.4px;color:#000;">549</div><div class="t" style="left:607px;top:474.62px;font-size:11px;color:#000;">24.09 МБ</div><div class="t" style="left:407.5px;top:491.14px;font-size:11.6px;color:#000;">D:\ФОТ... ОБОИ\</div><div class="t" style="left:507.5px;top:491.32px;font-size:11.4px;color:#000;">4</div><div class="t" style="left:607px;top:491.69px;font-size:11px;color:#000;">155.11 КБ</div><div class="t" style="left:407.5px;top:508.21px;font-size:11.6px;color:#000;">D:\Новая папка\</div><div class="t" style="left:507.5px;top:508.39px;font-size:11.4px;color:#000;">15</div><div class="t" style="left:607px;top:508.75px;font-size:11px;color:#000;">123.10 КБ</div><div class="t" style="left:407.5px;top:525.28px;font-size:11.6px;color:#000;">C:\Users...ictures\</div><div class="t" style="left:507.5px;top:525.46px;font-size:11.4px;color:#000;">8</div><div class="t" style="left:607px;top:525.82px;font-size:11px;color:#000;">33.37 КБ</div><div style="position:absolute;left:404px;top:609px;width:55px;height:17px;background:#cccccc;border:1px solid #bfbfbf;box-sizing:border-box"></div><div class="t" style="left:404px;top:610.2px;width:55px;height:17px;line-height:17px;text-align:center;font-size:11px;color:#838383">Удалить</div><div style="position:absolute;left:706px;top:609px;width:108px;height:17px;background:#e1e1e1;border:1px solid #adadad;box-sizing:border-box"></div><div class="t" style="left:706px;top:610.2px;width:108px;height:17px;line-height:17px;text-align:center;font-size:11px;color:#000">Оптимизировать...</div><div style="position:absolute;left:822px;top:609px;width:140px;height:17px;background:#e1e1e1;border:1px solid #adadad;box-sizing:border-box"></div><div class="t" style="left:822px;top:610.2px;width:140px;height:17px;line-height:17px;text-align:center;font-size:11px;color:#000">Импортировать папку...</div><div style="position:absolute;left:971px;top:609px;width:95px;height:17px;background:#cccccc;border:1px solid #bfbfbf;box-sizing:border-box"></div><div class="t" style="left:971px;top:610.2px;width:95px;height:17px;line-height:17px;text-align:center;font-size:11px;color:#838383">Переместить...</div><div style="position:absolute;left:404px;top:634px;width:86px;height:18px;background:#e1e1e1;border:1px solid #adadad;box-sizing:border-box"></div><div class="t" style="left:404px;top:635.2px;width:86px;height:18px;line-height:18px;text-align:center;font-size:11px;color:#000">Очистить всё</div><div style="position:absolute;left:832px;top:635px;width:115px;height:17px;background:#e1e1e1;border:1px solid #adadad;box-sizing:border-box"></div><div class="t" style="left:832px;top:636.2px;width:115px;height:17px;line-height:17px;text-align:center;font-size:11px;color:#000">Пересоздать эскизы</div><div style="position:absolute;left:955px;top:635px;width:111px;height:17px;background:#e1e1e1;border:1px solid #adadad;box-sizing:border-box"></div><div class="t" style="left:955px;top:636.2px;width:111px;height:17px;line-height:17px;text-align:center;font-size:11px;color:#000">Проверить папки...</div><div style="position:absolute;left:950px;top:699px;width:72px;height:21px;background:#e1e1e1;border:2px solid #0078d7;box-sizing:border-box"></div><div class="t" style="left:950px;top:700.5px;width:72px;height:21px;line-height:21px;text-align:center;font-size:11.2px">OK</div><div style="position:absolute;left:1031px;top:699px;width:73px;height:21px;background:#e1e1e1;border:1px solid #adadad;box-sizing:border-box"></div><div class="t" style="left:1031px;top:700.2px;width:73px;height:21px;line-height:21px;text-align:center;font-size:11.2px;color:#000">Отмена</div>
</body></html>
